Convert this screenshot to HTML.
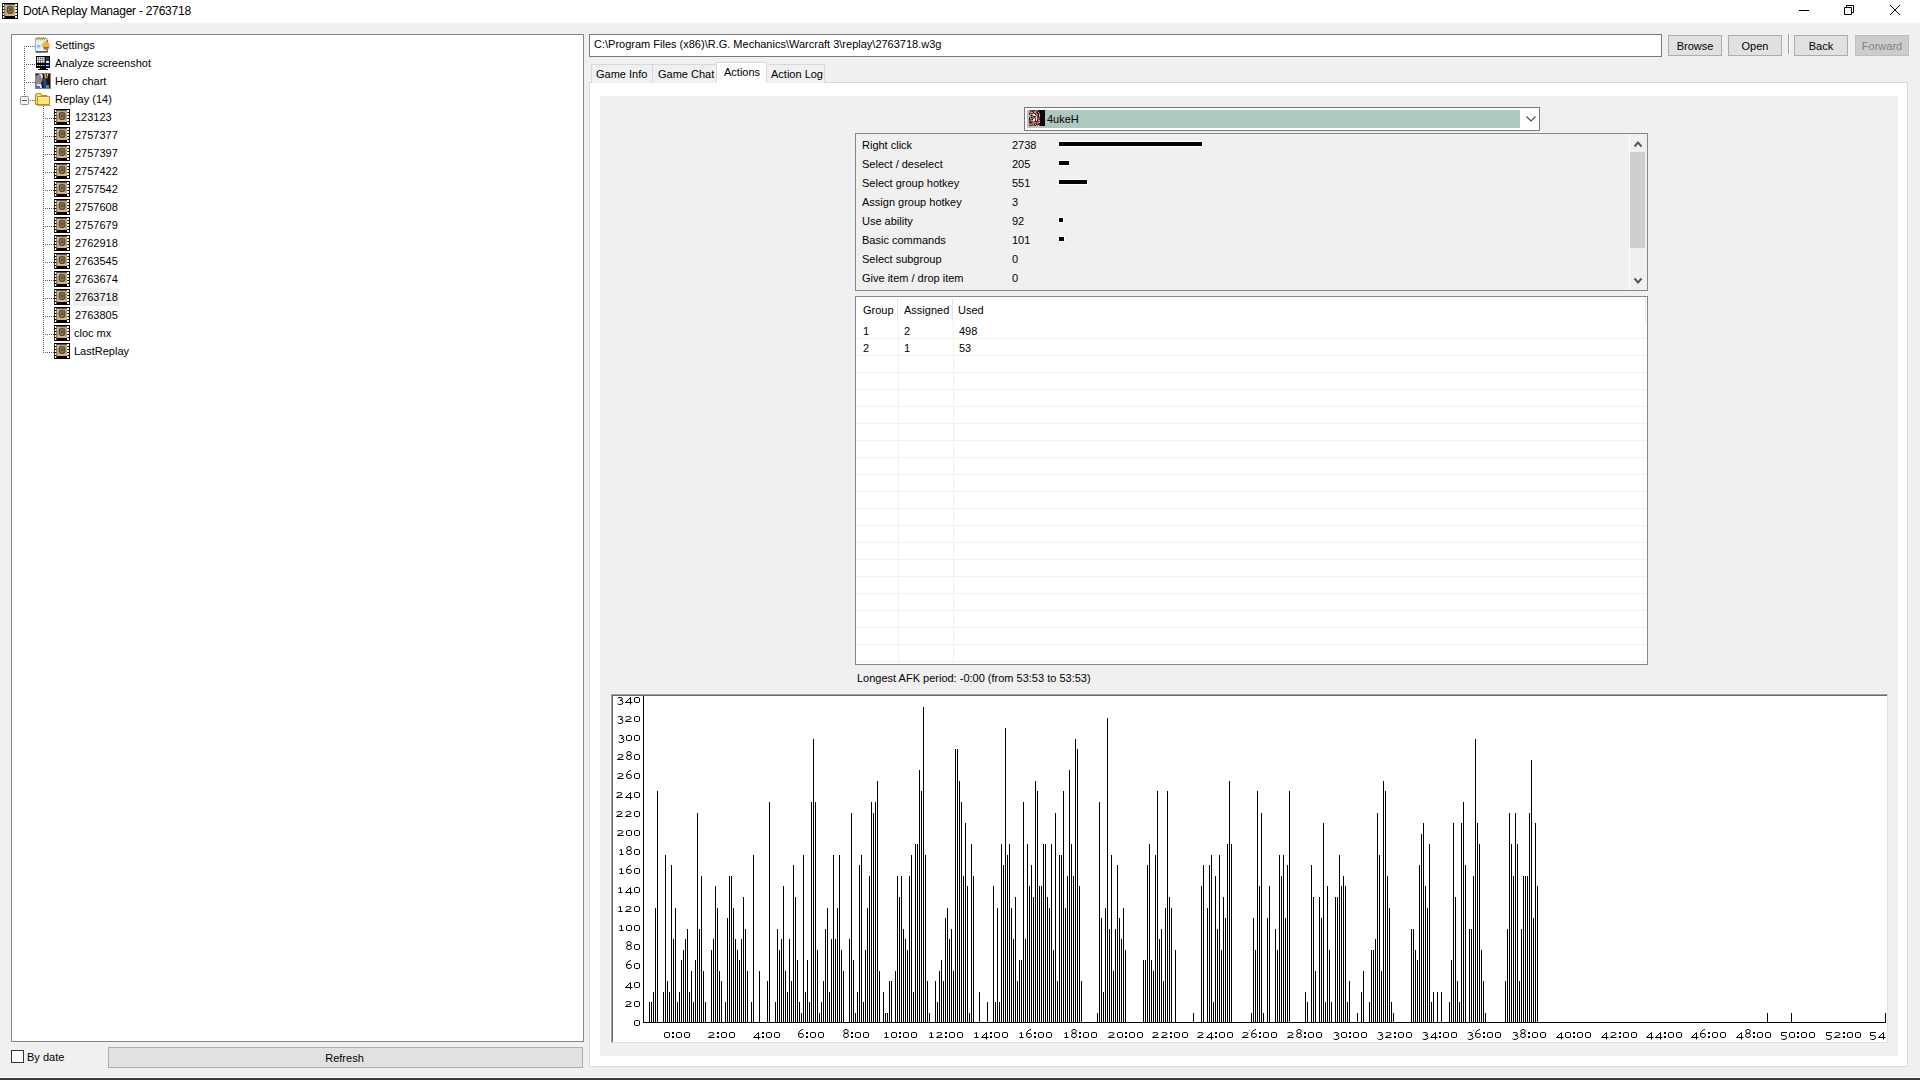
<!DOCTYPE html><html><head><meta charset="utf-8"><style>
*{margin:0;padding:0;box-sizing:border-box}
html,body{width:1920px;height:1080px;overflow:hidden;background:#f0f0f0;font-family:"Liberation Sans",sans-serif;font-size:11px;color:#000}
.a{position:absolute}
.t{position:absolute;white-space:nowrap;line-height:13px;height:13px}
.btn{position:absolute;background:#e1e1e1;border:1px solid #adadad;text-align:center;line-height:19px}
.tab{position:absolute;background:#f0f0f0;border:1px solid #d9d9d9;border-bottom:none;text-align:center}
</style></head><body>
<div class="a" style="left:0px;top:0px;width:1920px;height:23px;background:#fff"></div>
<div class="a" style="left:2px;top:3px"><svg width="16" height="16" viewBox="0 0 16 16"><rect width="16" height="16" fill="#000"/><rect x="2.5" y="1.5" width="11" height="11.5" fill="#b9a27a"/><rect x="3" y="2" width="3" height="3" fill="#cdb88e"/><path d="M5.5 4Q8 2.8 10.5 4.2L11 8Q10 10.8 8 10.8L6.2 10Q4.8 8 5.5 4Z" fill="#8a7654" stroke="#54452c" stroke-width="1.1"/><rect x="7" y="5.5" width="2.5" height="2.5" fill="#5e4e34"/><rect x="4" y="11" width="8.5" height="1.6" fill="#dcb48c"/><rect x="0.8" y="1" width="1.5" height="2" fill="#fff"/><rect x="13" y="1" width="2" height="2" fill="#fff"/><rect x="0.8" y="4" width="1.5" height="2" fill="#fff"/><rect x="13" y="4" width="2" height="2" fill="#fff"/><rect x="0.8" y="7" width="1.5" height="2" fill="#fff"/><rect x="13" y="7" width="2" height="2" fill="#fff"/><rect x="0.8" y="10" width="1.5" height="2" fill="#fff"/><rect x="13" y="10" width="2" height="2" fill="#fff"/><rect x="0.8" y="13" width="1.5" height="2" fill="#fff"/><rect x="13" y="13" width="2" height="2" fill="#fff"/></svg></div>
<div class="t" style="left:23px;top:5px;font-size:12px;color:#000;letter-spacing:-0.24px">DotA Replay Manager - 2763718</div>
<div class="a" style="left:1799px;top:10px;width:10px;height:1px;background:#000"></div>
<svg class="a" style="left:1840px;top:2px" width="20" height="18"><path d="M4.5 5.5h7v7h-7z M6.5 5.5V3.5H13.5V10.5H11.5" fill="none" stroke="#000" stroke-width="1"/></svg>
<svg class="a" style="left:1886px;top:2px" width="20" height="18"><path d="M4 3L14 13M14 3L4 13" fill="none" stroke="#000" stroke-width="1"/></svg>
<div class="a" style="left:11px;top:34px;width:573px;height:1008px;background:#fff;border:1px solid #828790"></div>
<div class="t" style="left:55px;top:39px;font-size:11px;color:#000;">Settings</div>
<div class="a" style="left:35px;top:37px;line-height:0"><svg width="16" height="16" viewBox="0 0 16 16"><rect x="0.5" y="1.5" width="11.5" height="13.5" fill="#e2f4fb" stroke="#aaa8d8" stroke-width="1"/><rect x="1" y="14" width="12" height="1.6" fill="#4c5468"/><rect x="11.5" y="3" width="1.5" height="12" fill="#707888"/><path d="M1.5 2.5L2.5 0.5L3.5 2.5L4.5 0.5L5.5 2.5L6.5 0.5L7.5 2.5L8.5 0.5L9.5 2.5L10.5 0.5" fill="none" stroke="#c0a030" stroke-width="1.2"/><rect x="2" y="8" width="3.5" height="2.5" fill="#90bce8"/><path d="M7.5 5.5h2v-1.5h2v1.5h2.5v2h1v2.5h-1v1.5H8v-1.5h-1v-2.5h0.5z" fill="#f2b634"/><path d="M8.5 10h5.5v1.5H11v1H9z" fill="#a8601a"/></svg></div>
<div class="t" style="left:55px;top:57px;font-size:11px;color:#000;">Analyze screenshot</div>
<div class="a" style="left:35px;top:55px;line-height:0"><svg width="16" height="16" viewBox="0 0 16 16" shape-rendering="crispEdges"><rect x="1" y="1" width="14" height="12" fill="#000"/><rect x="5" y="13" width="6" height="1" fill="#000"/><rect x="3" y="14" width="10" height="1" fill="#000"/><rect x="2" y="2" width="1" height="1" fill="#e8e8e8"/><rect x="3" y="2" width="1" height="1" fill="#9a9a9a"/><rect x="2" y="3" width="1" height="1" fill="#b8b8b8"/><rect x="3" y="3" width="1" height="1" fill="#606060"/><rect x="2" y="4" width="1" height="1" fill="#e8e8e8"/><rect x="3" y="4" width="1" height="1" fill="#9a9a9a"/><rect x="2" y="5" width="1" height="1" fill="#b8b8b8"/><rect x="3" y="5" width="1" height="1" fill="#606060"/><rect x="2" y="6" width="1" height="1" fill="#e8e8e8"/><rect x="3" y="6" width="1" height="1" fill="#9a9a9a"/><rect x="2" y="7" width="1" height="1" fill="#b8b8b8"/><rect x="3" y="7" width="1" height="1" fill="#606060"/><rect x="4" y="2" width="1" height="1" fill="#e8e8e8"/><rect x="5" y="2" width="1" height="1" fill="#9a9a9a"/><rect x="4" y="3" width="1" height="1" fill="#b8b8b8"/><rect x="5" y="3" width="1" height="1" fill="#606060"/><rect x="4" y="4" width="1" height="1" fill="#e8e8e8"/><rect x="5" y="4" width="1" height="1" fill="#9a9a9a"/><rect x="4" y="5" width="1" height="1" fill="#b8b8b8"/><rect x="5" y="5" width="1" height="1" fill="#606060"/><rect x="4" y="6" width="1" height="1" fill="#e8e8e8"/><rect x="5" y="6" width="1" height="1" fill="#9a9a9a"/><rect x="4" y="7" width="1" height="1" fill="#b8b8b8"/><rect x="5" y="7" width="1" height="1" fill="#606060"/><rect x="6" y="2" width="1" height="1" fill="#e8e8e8"/><rect x="7" y="2" width="1" height="1" fill="#9a9a9a"/><rect x="6" y="3" width="1" height="1" fill="#b8b8b8"/><rect x="7" y="3" width="1" height="1" fill="#606060"/><rect x="6" y="4" width="1" height="1" fill="#e8e8e8"/><rect x="7" y="4" width="1" height="1" fill="#9a9a9a"/><rect x="6" y="5" width="1" height="1" fill="#b8b8b8"/><rect x="7" y="5" width="1" height="1" fill="#606060"/><rect x="6" y="6" width="1" height="1" fill="#e8e8e8"/><rect x="7" y="6" width="1" height="1" fill="#9a9a9a"/><rect x="6" y="7" width="1" height="1" fill="#b8b8b8"/><rect x="7" y="7" width="1" height="1" fill="#606060"/><rect x="8" y="2" width="1" height="1" fill="#e8e8e8"/><rect x="9" y="2" width="1" height="1" fill="#9a9a9a"/><rect x="8" y="3" width="1" height="1" fill="#b8b8b8"/><rect x="9" y="3" width="1" height="1" fill="#606060"/><rect x="8" y="4" width="1" height="1" fill="#e8e8e8"/><rect x="9" y="4" width="1" height="1" fill="#9a9a9a"/><rect x="8" y="5" width="1" height="1" fill="#b8b8b8"/><rect x="9" y="5" width="1" height="1" fill="#606060"/><rect x="8" y="6" width="1" height="1" fill="#e8e8e8"/><rect x="9" y="6" width="1" height="1" fill="#9a9a9a"/><rect x="8" y="7" width="1" height="1" fill="#b8b8b8"/><rect x="9" y="7" width="1" height="1" fill="#606060"/><rect x="2" y="10" width="1" height="1" fill="#c8c8c8"/><rect x="3" y="10" width="1" height="1" fill="#505050"/><rect x="4" y="10" width="1" height="1" fill="#c8c8c8"/><rect x="5" y="10" width="1" height="1" fill="#505050"/><rect x="6" y="10" width="1" height="1" fill="#c8c8c8"/><rect x="7" y="10" width="1" height="1" fill="#505050"/><rect x="8" y="10" width="1" height="1" fill="#c8c8c8"/><rect x="9" y="10" width="1" height="1" fill="#505050"/><rect x="11" y="2" width="3" height="4" fill="#0b4a44"/><rect x="11" y="6" width="3" height="2" fill="#e8e8e8"/><rect x="11" y="9" width="3" height="1" fill="#1010ff"/><rect x="11" y="10" width="3" height="1" fill="#c0c0c0"/><rect x="11" y="11" width="3" height="1" fill="#1010ff"/></svg></div>
<div class="t" style="left:55px;top:75px;font-size:11px;color:#000;">Hero chart</div>
<div class="a" style="left:35px;top:73px;line-height:0"><svg width="16" height="16" viewBox="0 0 16 16"><rect x="0" y="0" width="16" height="16" fill="#8a8478"/><rect x="1" y="1" width="14" height="14" fill="#1a1412"/><path d="M1 3L4 1h3l1 5-2 4 1 4H1z" fill="#8c8c8c"/><path d="M5 1h2l1 3-1 1z" fill="#f0f0f0"/><path d="M9 1h2l1 4-2 1z" fill="#d8a020"/><path d="M12 1h1l1 3-1 2z" fill="#f4f4f4"/><path d="M7 6h4l1 4-1 5H9z" fill="#1a4a8a"/><path d="M2 11h4l1 4H2z" fill="#e8e8e8"/><rect x="1" y="13" width="4" height="2" fill="#2a78c8"/><rect x="11" y="12" width="3" height="3" fill="#3a8ad0"/><rect x="13" y="2" width="2" height="8" fill="#3a0808"/></svg></div>
<div class="t" style="left:55px;top:93px;font-size:11px;color:#000;">Replay (14)</div>
<div class="a" style="left:35px;top:92px;line-height:0"><svg width="16" height="14" viewBox="0 0 16 14"><path d="M0.5 12.5V2.5h1v-1h4v1h1v1h5.5v1.5h1.5V12.5z" fill="#f8e070" stroke="#c88a10" stroke-width="1"/><path d="M2.5 12.5V4.5h12v8z" fill="#fce878" stroke="#c88a10" stroke-width="1"/><rect x="3" y="5" width="11" height="1" fill="#fffde8"/><rect x="2" y="13" width="14" height="1" fill="#606878" opacity="0.6"/></svg></div>
<svg class="a" style="left:0;top:0" width="600" height="400" shape-rendering="crispEdges"><path d="M24 46h1v1h-1zM24 48h1v1h-1zM24 50h1v1h-1zM24 52h1v1h-1zM24 54h1v1h-1zM24 56h1v1h-1zM24 58h1v1h-1zM24 60h1v1h-1zM24 62h1v1h-1zM24 64h1v1h-1zM24 66h1v1h-1zM24 68h1v1h-1zM24 70h1v1h-1zM24 72h1v1h-1zM24 74h1v1h-1zM24 76h1v1h-1zM24 78h1v1h-1zM24 80h1v1h-1zM24 82h1v1h-1zM24 84h1v1h-1zM24 86h1v1h-1zM24 88h1v1h-1zM24 90h1v1h-1zM24 92h1v1h-1zM24 94h1v1h-1zM26 46h1v1h-1zM28 46h1v1h-1zM30 46h1v1h-1zM32 46h1v1h-1zM34 46h1v1h-1zM26 64h1v1h-1zM28 64h1v1h-1zM30 64h1v1h-1zM32 64h1v1h-1zM34 64h1v1h-1zM26 82h1v1h-1zM28 82h1v1h-1zM30 82h1v1h-1zM32 82h1v1h-1zM34 82h1v1h-1zM30 100h1v1h-1zM32 100h1v1h-1zM34 100h1v1h-1zM43 106h1v1h-1zM43 108h1v1h-1zM43 110h1v1h-1zM43 112h1v1h-1zM43 114h1v1h-1zM43 116h1v1h-1zM43 118h1v1h-1zM43 120h1v1h-1zM43 122h1v1h-1zM43 124h1v1h-1zM43 126h1v1h-1zM43 128h1v1h-1zM43 130h1v1h-1zM43 132h1v1h-1zM43 134h1v1h-1zM43 136h1v1h-1zM43 138h1v1h-1zM43 140h1v1h-1zM43 142h1v1h-1zM43 144h1v1h-1zM43 146h1v1h-1zM43 148h1v1h-1zM43 150h1v1h-1zM43 152h1v1h-1zM43 154h1v1h-1zM43 156h1v1h-1zM43 158h1v1h-1zM43 160h1v1h-1zM43 162h1v1h-1zM43 164h1v1h-1zM43 166h1v1h-1zM43 168h1v1h-1zM43 170h1v1h-1zM43 172h1v1h-1zM43 174h1v1h-1zM43 176h1v1h-1zM43 178h1v1h-1zM43 180h1v1h-1zM43 182h1v1h-1zM43 184h1v1h-1zM43 186h1v1h-1zM43 188h1v1h-1zM43 190h1v1h-1zM43 192h1v1h-1zM43 194h1v1h-1zM43 196h1v1h-1zM43 198h1v1h-1zM43 200h1v1h-1zM43 202h1v1h-1zM43 204h1v1h-1zM43 206h1v1h-1zM43 208h1v1h-1zM43 210h1v1h-1zM43 212h1v1h-1zM43 214h1v1h-1zM43 216h1v1h-1zM43 218h1v1h-1zM43 220h1v1h-1zM43 222h1v1h-1zM43 224h1v1h-1zM43 226h1v1h-1zM43 228h1v1h-1zM43 230h1v1h-1zM43 232h1v1h-1zM43 234h1v1h-1zM43 236h1v1h-1zM43 238h1v1h-1zM43 240h1v1h-1zM43 242h1v1h-1zM43 244h1v1h-1zM43 246h1v1h-1zM43 248h1v1h-1zM43 250h1v1h-1zM43 252h1v1h-1zM43 254h1v1h-1zM43 256h1v1h-1zM43 258h1v1h-1zM43 260h1v1h-1zM43 262h1v1h-1zM43 264h1v1h-1zM43 266h1v1h-1zM43 268h1v1h-1zM43 270h1v1h-1zM43 272h1v1h-1zM43 274h1v1h-1zM43 276h1v1h-1zM43 278h1v1h-1zM43 280h1v1h-1zM43 282h1v1h-1zM43 284h1v1h-1zM43 286h1v1h-1zM43 288h1v1h-1zM43 290h1v1h-1zM43 292h1v1h-1zM43 294h1v1h-1zM43 296h1v1h-1zM43 298h1v1h-1zM43 300h1v1h-1zM43 302h1v1h-1zM43 304h1v1h-1zM43 306h1v1h-1zM43 308h1v1h-1zM43 310h1v1h-1zM43 312h1v1h-1zM43 314h1v1h-1zM43 316h1v1h-1zM43 318h1v1h-1zM43 320h1v1h-1zM43 322h1v1h-1zM43 324h1v1h-1zM43 326h1v1h-1zM43 328h1v1h-1zM43 330h1v1h-1zM43 332h1v1h-1zM43 334h1v1h-1zM43 336h1v1h-1zM43 338h1v1h-1zM43 340h1v1h-1zM43 342h1v1h-1zM43 344h1v1h-1zM43 346h1v1h-1zM43 348h1v1h-1zM43 350h1v1h-1zM43 352h1v1h-1zM45 118h1v1h-1zM47 118h1v1h-1zM49 118h1v1h-1zM51 118h1v1h-1zM53 118h1v1h-1zM45 136h1v1h-1zM47 136h1v1h-1zM49 136h1v1h-1zM51 136h1v1h-1zM53 136h1v1h-1zM45 154h1v1h-1zM47 154h1v1h-1zM49 154h1v1h-1zM51 154h1v1h-1zM53 154h1v1h-1zM45 172h1v1h-1zM47 172h1v1h-1zM49 172h1v1h-1zM51 172h1v1h-1zM53 172h1v1h-1zM45 190h1v1h-1zM47 190h1v1h-1zM49 190h1v1h-1zM51 190h1v1h-1zM53 190h1v1h-1zM45 208h1v1h-1zM47 208h1v1h-1zM49 208h1v1h-1zM51 208h1v1h-1zM53 208h1v1h-1zM45 226h1v1h-1zM47 226h1v1h-1zM49 226h1v1h-1zM51 226h1v1h-1zM53 226h1v1h-1zM45 244h1v1h-1zM47 244h1v1h-1zM49 244h1v1h-1zM51 244h1v1h-1zM53 244h1v1h-1zM45 262h1v1h-1zM47 262h1v1h-1zM49 262h1v1h-1zM51 262h1v1h-1zM53 262h1v1h-1zM45 280h1v1h-1zM47 280h1v1h-1zM49 280h1v1h-1zM51 280h1v1h-1zM53 280h1v1h-1zM45 298h1v1h-1zM47 298h1v1h-1zM49 298h1v1h-1zM51 298h1v1h-1zM53 298h1v1h-1zM45 316h1v1h-1zM47 316h1v1h-1zM49 316h1v1h-1zM51 316h1v1h-1zM53 316h1v1h-1zM45 334h1v1h-1zM47 334h1v1h-1zM49 334h1v1h-1zM51 334h1v1h-1zM53 334h1v1h-1zM45 352h1v1h-1zM47 352h1v1h-1zM49 352h1v1h-1zM51 352h1v1h-1zM53 352h1v1h-1z" fill="#606060"/></svg>
<div class="a" style="left:20px;top:96px;line-height:0"><svg width="9" height="9" viewBox="0 0 9 9"><rect x="0.5" y="0.5" width="8" height="8" rx="1" fill="#f4f4f4" stroke="#8c8c8c" stroke-width="1"/><rect x="2" y="4" width="5" height="1" fill="#3c50a0"/></svg></div>
<div class="t" style="left:75px;top:111px;font-size:11px;color:#000;">123123</div>
<div class="a" style="left:54px;top:109px;line-height:0"><svg width="16" height="16" viewBox="0 0 16 16"><rect width="16" height="16" fill="#000"/><rect x="2.5" y="1.5" width="11" height="11.5" fill="#b9a27a"/><rect x="3" y="2" width="3" height="3" fill="#cdb88e"/><path d="M5.5 4Q8 2.8 10.5 4.2L11 8Q10 10.8 8 10.8L6.2 10Q4.8 8 5.5 4Z" fill="#8a7654" stroke="#54452c" stroke-width="1.1"/><rect x="7" y="5.5" width="2.5" height="2.5" fill="#5e4e34"/><rect x="4" y="11" width="8.5" height="1.6" fill="#dcb48c"/><rect x="0.8" y="1" width="1.5" height="2" fill="#fff"/><rect x="13" y="1" width="2" height="2" fill="#fff"/><rect x="0.8" y="4" width="1.5" height="2" fill="#fff"/><rect x="13" y="4" width="2" height="2" fill="#fff"/><rect x="0.8" y="7" width="1.5" height="2" fill="#fff"/><rect x="13" y="7" width="2" height="2" fill="#fff"/><rect x="0.8" y="10" width="1.5" height="2" fill="#fff"/><rect x="13" y="10" width="2" height="2" fill="#fff"/><rect x="0.8" y="13" width="1.5" height="2" fill="#fff"/><rect x="13" y="13" width="2" height="2" fill="#fff"/></svg></div>
<div class="t" style="left:75px;top:129px;font-size:11px;color:#000;">2757377</div>
<div class="a" style="left:54px;top:127px;line-height:0"><svg width="16" height="16" viewBox="0 0 16 16"><rect width="16" height="16" fill="#000"/><rect x="2.5" y="1.5" width="11" height="11.5" fill="#b9a27a"/><rect x="3" y="2" width="3" height="3" fill="#cdb88e"/><path d="M5.5 4Q8 2.8 10.5 4.2L11 8Q10 10.8 8 10.8L6.2 10Q4.8 8 5.5 4Z" fill="#8a7654" stroke="#54452c" stroke-width="1.1"/><rect x="7" y="5.5" width="2.5" height="2.5" fill="#5e4e34"/><rect x="4" y="11" width="8.5" height="1.6" fill="#dcb48c"/><rect x="0.8" y="1" width="1.5" height="2" fill="#fff"/><rect x="13" y="1" width="2" height="2" fill="#fff"/><rect x="0.8" y="4" width="1.5" height="2" fill="#fff"/><rect x="13" y="4" width="2" height="2" fill="#fff"/><rect x="0.8" y="7" width="1.5" height="2" fill="#fff"/><rect x="13" y="7" width="2" height="2" fill="#fff"/><rect x="0.8" y="10" width="1.5" height="2" fill="#fff"/><rect x="13" y="10" width="2" height="2" fill="#fff"/><rect x="0.8" y="13" width="1.5" height="2" fill="#fff"/><rect x="13" y="13" width="2" height="2" fill="#fff"/></svg></div>
<div class="t" style="left:75px;top:147px;font-size:11px;color:#000;">2757397</div>
<div class="a" style="left:54px;top:145px;line-height:0"><svg width="16" height="16" viewBox="0 0 16 16"><rect width="16" height="16" fill="#000"/><rect x="2.5" y="1.5" width="11" height="11.5" fill="#b9a27a"/><rect x="3" y="2" width="3" height="3" fill="#cdb88e"/><path d="M5.5 4Q8 2.8 10.5 4.2L11 8Q10 10.8 8 10.8L6.2 10Q4.8 8 5.5 4Z" fill="#8a7654" stroke="#54452c" stroke-width="1.1"/><rect x="7" y="5.5" width="2.5" height="2.5" fill="#5e4e34"/><rect x="4" y="11" width="8.5" height="1.6" fill="#dcb48c"/><rect x="0.8" y="1" width="1.5" height="2" fill="#fff"/><rect x="13" y="1" width="2" height="2" fill="#fff"/><rect x="0.8" y="4" width="1.5" height="2" fill="#fff"/><rect x="13" y="4" width="2" height="2" fill="#fff"/><rect x="0.8" y="7" width="1.5" height="2" fill="#fff"/><rect x="13" y="7" width="2" height="2" fill="#fff"/><rect x="0.8" y="10" width="1.5" height="2" fill="#fff"/><rect x="13" y="10" width="2" height="2" fill="#fff"/><rect x="0.8" y="13" width="1.5" height="2" fill="#fff"/><rect x="13" y="13" width="2" height="2" fill="#fff"/></svg></div>
<div class="t" style="left:75px;top:165px;font-size:11px;color:#000;">2757422</div>
<div class="a" style="left:54px;top:163px;line-height:0"><svg width="16" height="16" viewBox="0 0 16 16"><rect width="16" height="16" fill="#000"/><rect x="2.5" y="1.5" width="11" height="11.5" fill="#b9a27a"/><rect x="3" y="2" width="3" height="3" fill="#cdb88e"/><path d="M5.5 4Q8 2.8 10.5 4.2L11 8Q10 10.8 8 10.8L6.2 10Q4.8 8 5.5 4Z" fill="#8a7654" stroke="#54452c" stroke-width="1.1"/><rect x="7" y="5.5" width="2.5" height="2.5" fill="#5e4e34"/><rect x="4" y="11" width="8.5" height="1.6" fill="#dcb48c"/><rect x="0.8" y="1" width="1.5" height="2" fill="#fff"/><rect x="13" y="1" width="2" height="2" fill="#fff"/><rect x="0.8" y="4" width="1.5" height="2" fill="#fff"/><rect x="13" y="4" width="2" height="2" fill="#fff"/><rect x="0.8" y="7" width="1.5" height="2" fill="#fff"/><rect x="13" y="7" width="2" height="2" fill="#fff"/><rect x="0.8" y="10" width="1.5" height="2" fill="#fff"/><rect x="13" y="10" width="2" height="2" fill="#fff"/><rect x="0.8" y="13" width="1.5" height="2" fill="#fff"/><rect x="13" y="13" width="2" height="2" fill="#fff"/></svg></div>
<div class="t" style="left:75px;top:183px;font-size:11px;color:#000;">2757542</div>
<div class="a" style="left:54px;top:181px;line-height:0"><svg width="16" height="16" viewBox="0 0 16 16"><rect width="16" height="16" fill="#000"/><rect x="2.5" y="1.5" width="11" height="11.5" fill="#b9a27a"/><rect x="3" y="2" width="3" height="3" fill="#cdb88e"/><path d="M5.5 4Q8 2.8 10.5 4.2L11 8Q10 10.8 8 10.8L6.2 10Q4.8 8 5.5 4Z" fill="#8a7654" stroke="#54452c" stroke-width="1.1"/><rect x="7" y="5.5" width="2.5" height="2.5" fill="#5e4e34"/><rect x="4" y="11" width="8.5" height="1.6" fill="#dcb48c"/><rect x="0.8" y="1" width="1.5" height="2" fill="#fff"/><rect x="13" y="1" width="2" height="2" fill="#fff"/><rect x="0.8" y="4" width="1.5" height="2" fill="#fff"/><rect x="13" y="4" width="2" height="2" fill="#fff"/><rect x="0.8" y="7" width="1.5" height="2" fill="#fff"/><rect x="13" y="7" width="2" height="2" fill="#fff"/><rect x="0.8" y="10" width="1.5" height="2" fill="#fff"/><rect x="13" y="10" width="2" height="2" fill="#fff"/><rect x="0.8" y="13" width="1.5" height="2" fill="#fff"/><rect x="13" y="13" width="2" height="2" fill="#fff"/></svg></div>
<div class="t" style="left:75px;top:201px;font-size:11px;color:#000;">2757608</div>
<div class="a" style="left:54px;top:199px;line-height:0"><svg width="16" height="16" viewBox="0 0 16 16"><rect width="16" height="16" fill="#000"/><rect x="2.5" y="1.5" width="11" height="11.5" fill="#b9a27a"/><rect x="3" y="2" width="3" height="3" fill="#cdb88e"/><path d="M5.5 4Q8 2.8 10.5 4.2L11 8Q10 10.8 8 10.8L6.2 10Q4.8 8 5.5 4Z" fill="#8a7654" stroke="#54452c" stroke-width="1.1"/><rect x="7" y="5.5" width="2.5" height="2.5" fill="#5e4e34"/><rect x="4" y="11" width="8.5" height="1.6" fill="#dcb48c"/><rect x="0.8" y="1" width="1.5" height="2" fill="#fff"/><rect x="13" y="1" width="2" height="2" fill="#fff"/><rect x="0.8" y="4" width="1.5" height="2" fill="#fff"/><rect x="13" y="4" width="2" height="2" fill="#fff"/><rect x="0.8" y="7" width="1.5" height="2" fill="#fff"/><rect x="13" y="7" width="2" height="2" fill="#fff"/><rect x="0.8" y="10" width="1.5" height="2" fill="#fff"/><rect x="13" y="10" width="2" height="2" fill="#fff"/><rect x="0.8" y="13" width="1.5" height="2" fill="#fff"/><rect x="13" y="13" width="2" height="2" fill="#fff"/></svg></div>
<div class="t" style="left:75px;top:219px;font-size:11px;color:#000;">2757679</div>
<div class="a" style="left:54px;top:217px;line-height:0"><svg width="16" height="16" viewBox="0 0 16 16"><rect width="16" height="16" fill="#000"/><rect x="2.5" y="1.5" width="11" height="11.5" fill="#b9a27a"/><rect x="3" y="2" width="3" height="3" fill="#cdb88e"/><path d="M5.5 4Q8 2.8 10.5 4.2L11 8Q10 10.8 8 10.8L6.2 10Q4.8 8 5.5 4Z" fill="#8a7654" stroke="#54452c" stroke-width="1.1"/><rect x="7" y="5.5" width="2.5" height="2.5" fill="#5e4e34"/><rect x="4" y="11" width="8.5" height="1.6" fill="#dcb48c"/><rect x="0.8" y="1" width="1.5" height="2" fill="#fff"/><rect x="13" y="1" width="2" height="2" fill="#fff"/><rect x="0.8" y="4" width="1.5" height="2" fill="#fff"/><rect x="13" y="4" width="2" height="2" fill="#fff"/><rect x="0.8" y="7" width="1.5" height="2" fill="#fff"/><rect x="13" y="7" width="2" height="2" fill="#fff"/><rect x="0.8" y="10" width="1.5" height="2" fill="#fff"/><rect x="13" y="10" width="2" height="2" fill="#fff"/><rect x="0.8" y="13" width="1.5" height="2" fill="#fff"/><rect x="13" y="13" width="2" height="2" fill="#fff"/></svg></div>
<div class="t" style="left:75px;top:237px;font-size:11px;color:#000;">2762918</div>
<div class="a" style="left:54px;top:235px;line-height:0"><svg width="16" height="16" viewBox="0 0 16 16"><rect width="16" height="16" fill="#000"/><rect x="2.5" y="1.5" width="11" height="11.5" fill="#b9a27a"/><rect x="3" y="2" width="3" height="3" fill="#cdb88e"/><path d="M5.5 4Q8 2.8 10.5 4.2L11 8Q10 10.8 8 10.8L6.2 10Q4.8 8 5.5 4Z" fill="#8a7654" stroke="#54452c" stroke-width="1.1"/><rect x="7" y="5.5" width="2.5" height="2.5" fill="#5e4e34"/><rect x="4" y="11" width="8.5" height="1.6" fill="#dcb48c"/><rect x="0.8" y="1" width="1.5" height="2" fill="#fff"/><rect x="13" y="1" width="2" height="2" fill="#fff"/><rect x="0.8" y="4" width="1.5" height="2" fill="#fff"/><rect x="13" y="4" width="2" height="2" fill="#fff"/><rect x="0.8" y="7" width="1.5" height="2" fill="#fff"/><rect x="13" y="7" width="2" height="2" fill="#fff"/><rect x="0.8" y="10" width="1.5" height="2" fill="#fff"/><rect x="13" y="10" width="2" height="2" fill="#fff"/><rect x="0.8" y="13" width="1.5" height="2" fill="#fff"/><rect x="13" y="13" width="2" height="2" fill="#fff"/></svg></div>
<div class="t" style="left:75px;top:255px;font-size:11px;color:#000;">2763545</div>
<div class="a" style="left:54px;top:253px;line-height:0"><svg width="16" height="16" viewBox="0 0 16 16"><rect width="16" height="16" fill="#000"/><rect x="2.5" y="1.5" width="11" height="11.5" fill="#b9a27a"/><rect x="3" y="2" width="3" height="3" fill="#cdb88e"/><path d="M5.5 4Q8 2.8 10.5 4.2L11 8Q10 10.8 8 10.8L6.2 10Q4.8 8 5.5 4Z" fill="#8a7654" stroke="#54452c" stroke-width="1.1"/><rect x="7" y="5.5" width="2.5" height="2.5" fill="#5e4e34"/><rect x="4" y="11" width="8.5" height="1.6" fill="#dcb48c"/><rect x="0.8" y="1" width="1.5" height="2" fill="#fff"/><rect x="13" y="1" width="2" height="2" fill="#fff"/><rect x="0.8" y="4" width="1.5" height="2" fill="#fff"/><rect x="13" y="4" width="2" height="2" fill="#fff"/><rect x="0.8" y="7" width="1.5" height="2" fill="#fff"/><rect x="13" y="7" width="2" height="2" fill="#fff"/><rect x="0.8" y="10" width="1.5" height="2" fill="#fff"/><rect x="13" y="10" width="2" height="2" fill="#fff"/><rect x="0.8" y="13" width="1.5" height="2" fill="#fff"/><rect x="13" y="13" width="2" height="2" fill="#fff"/></svg></div>
<div class="t" style="left:75px;top:273px;font-size:11px;color:#000;">2763674</div>
<div class="a" style="left:54px;top:271px;line-height:0"><svg width="16" height="16" viewBox="0 0 16 16"><rect width="16" height="16" fill="#000"/><rect x="2.5" y="1.5" width="11" height="11.5" fill="#b9a27a"/><rect x="3" y="2" width="3" height="3" fill="#cdb88e"/><path d="M5.5 4Q8 2.8 10.5 4.2L11 8Q10 10.8 8 10.8L6.2 10Q4.8 8 5.5 4Z" fill="#8a7654" stroke="#54452c" stroke-width="1.1"/><rect x="7" y="5.5" width="2.5" height="2.5" fill="#5e4e34"/><rect x="4" y="11" width="8.5" height="1.6" fill="#dcb48c"/><rect x="0.8" y="1" width="1.5" height="2" fill="#fff"/><rect x="13" y="1" width="2" height="2" fill="#fff"/><rect x="0.8" y="4" width="1.5" height="2" fill="#fff"/><rect x="13" y="4" width="2" height="2" fill="#fff"/><rect x="0.8" y="7" width="1.5" height="2" fill="#fff"/><rect x="13" y="7" width="2" height="2" fill="#fff"/><rect x="0.8" y="10" width="1.5" height="2" fill="#fff"/><rect x="13" y="10" width="2" height="2" fill="#fff"/><rect x="0.8" y="13" width="1.5" height="2" fill="#fff"/><rect x="13" y="13" width="2" height="2" fill="#fff"/></svg></div>
<div class="a" style="left:73px;top:288px;width:46px;height:18px;background:#f0f0f0"></div>
<div class="t" style="left:75px;top:291px;font-size:11px;color:#000;">2763718</div>
<div class="a" style="left:54px;top:289px;line-height:0"><svg width="16" height="16" viewBox="0 0 16 16"><rect width="16" height="16" fill="#000"/><rect x="2.5" y="1.5" width="11" height="11.5" fill="#b9a27a"/><rect x="3" y="2" width="3" height="3" fill="#cdb88e"/><path d="M5.5 4Q8 2.8 10.5 4.2L11 8Q10 10.8 8 10.8L6.2 10Q4.8 8 5.5 4Z" fill="#8a7654" stroke="#54452c" stroke-width="1.1"/><rect x="7" y="5.5" width="2.5" height="2.5" fill="#5e4e34"/><rect x="4" y="11" width="8.5" height="1.6" fill="#dcb48c"/><rect x="0.8" y="1" width="1.5" height="2" fill="#fff"/><rect x="13" y="1" width="2" height="2" fill="#fff"/><rect x="0.8" y="4" width="1.5" height="2" fill="#fff"/><rect x="13" y="4" width="2" height="2" fill="#fff"/><rect x="0.8" y="7" width="1.5" height="2" fill="#fff"/><rect x="13" y="7" width="2" height="2" fill="#fff"/><rect x="0.8" y="10" width="1.5" height="2" fill="#fff"/><rect x="13" y="10" width="2" height="2" fill="#fff"/><rect x="0.8" y="13" width="1.5" height="2" fill="#fff"/><rect x="13" y="13" width="2" height="2" fill="#fff"/></svg></div>
<div class="t" style="left:75px;top:309px;font-size:11px;color:#000;">2763805</div>
<div class="a" style="left:54px;top:307px;line-height:0"><svg width="16" height="16" viewBox="0 0 16 16"><rect width="16" height="16" fill="#000"/><rect x="2.5" y="1.5" width="11" height="11.5" fill="#b9a27a"/><rect x="3" y="2" width="3" height="3" fill="#cdb88e"/><path d="M5.5 4Q8 2.8 10.5 4.2L11 8Q10 10.8 8 10.8L6.2 10Q4.8 8 5.5 4Z" fill="#8a7654" stroke="#54452c" stroke-width="1.1"/><rect x="7" y="5.5" width="2.5" height="2.5" fill="#5e4e34"/><rect x="4" y="11" width="8.5" height="1.6" fill="#dcb48c"/><rect x="0.8" y="1" width="1.5" height="2" fill="#fff"/><rect x="13" y="1" width="2" height="2" fill="#fff"/><rect x="0.8" y="4" width="1.5" height="2" fill="#fff"/><rect x="13" y="4" width="2" height="2" fill="#fff"/><rect x="0.8" y="7" width="1.5" height="2" fill="#fff"/><rect x="13" y="7" width="2" height="2" fill="#fff"/><rect x="0.8" y="10" width="1.5" height="2" fill="#fff"/><rect x="13" y="10" width="2" height="2" fill="#fff"/><rect x="0.8" y="13" width="1.5" height="2" fill="#fff"/><rect x="13" y="13" width="2" height="2" fill="#fff"/></svg></div>
<div class="t" style="left:74px;top:327px;font-size:11px;color:#000;">cloc mx</div>
<div class="a" style="left:54px;top:325px;line-height:0"><svg width="16" height="16" viewBox="0 0 16 16"><rect width="16" height="16" fill="#000"/><rect x="2.5" y="1.5" width="11" height="11.5" fill="#b9a27a"/><rect x="3" y="2" width="3" height="3" fill="#cdb88e"/><path d="M5.5 4Q8 2.8 10.5 4.2L11 8Q10 10.8 8 10.8L6.2 10Q4.8 8 5.5 4Z" fill="#8a7654" stroke="#54452c" stroke-width="1.1"/><rect x="7" y="5.5" width="2.5" height="2.5" fill="#5e4e34"/><rect x="4" y="11" width="8.5" height="1.6" fill="#dcb48c"/><rect x="0.8" y="1" width="1.5" height="2" fill="#fff"/><rect x="13" y="1" width="2" height="2" fill="#fff"/><rect x="0.8" y="4" width="1.5" height="2" fill="#fff"/><rect x="13" y="4" width="2" height="2" fill="#fff"/><rect x="0.8" y="7" width="1.5" height="2" fill="#fff"/><rect x="13" y="7" width="2" height="2" fill="#fff"/><rect x="0.8" y="10" width="1.5" height="2" fill="#fff"/><rect x="13" y="10" width="2" height="2" fill="#fff"/><rect x="0.8" y="13" width="1.5" height="2" fill="#fff"/><rect x="13" y="13" width="2" height="2" fill="#fff"/></svg></div>
<div class="t" style="left:74px;top:345px;font-size:11px;color:#000;">LastReplay</div>
<div class="a" style="left:54px;top:343px;line-height:0"><svg width="16" height="16" viewBox="0 0 16 16"><rect width="16" height="16" fill="#000"/><rect x="2.5" y="1.5" width="11" height="11.5" fill="#b9a27a"/><rect x="3" y="2" width="3" height="3" fill="#cdb88e"/><path d="M5.5 4Q8 2.8 10.5 4.2L11 8Q10 10.8 8 10.8L6.2 10Q4.8 8 5.5 4Z" fill="#8a7654" stroke="#54452c" stroke-width="1.1"/><rect x="7" y="5.5" width="2.5" height="2.5" fill="#5e4e34"/><rect x="4" y="11" width="8.5" height="1.6" fill="#dcb48c"/><rect x="0.8" y="1" width="1.5" height="2" fill="#fff"/><rect x="13" y="1" width="2" height="2" fill="#fff"/><rect x="0.8" y="4" width="1.5" height="2" fill="#fff"/><rect x="13" y="4" width="2" height="2" fill="#fff"/><rect x="0.8" y="7" width="1.5" height="2" fill="#fff"/><rect x="13" y="7" width="2" height="2" fill="#fff"/><rect x="0.8" y="10" width="1.5" height="2" fill="#fff"/><rect x="13" y="10" width="2" height="2" fill="#fff"/><rect x="0.8" y="13" width="1.5" height="2" fill="#fff"/><rect x="13" y="13" width="2" height="2" fill="#fff"/></svg></div>
<div class="a" style="left:11px;top:1050px;width:13px;height:13px;background:#fff;border:1px solid #333"></div>
<div class="t" style="left:27px;top:1051px;font-size:11px;color:#000;">By date</div>
<div class="btn" style="left:108px;top:1047px;width:475px;height:21px;line-height:20px;padding-right:2px">Refresh</div>
<div class="a" style="left:589px;top:34px;width:1073px;height:23px;background:#fff;border:1px solid #7a7a7a"></div>
<div class="t" style="left:594px;top:38px;font-size:11px;color:#000;">C:\Program Files (x86)\R.G. Mechanics\Warcraft 3\replay\2763718.w3g</div>
<div class="btn" style="left:1668px;top:35px;width:54px;height:21px;line-height:20px">Browse</div>
<div class="btn" style="left:1728px;top:35px;width:54px;height:21px;line-height:20px">Open</div>
<div class="btn" style="left:1794px;top:35px;width:54px;height:21px;line-height:20px">Back</div>
<div class="btn" style="left:1855px;top:35px;width:54px;height:21px;line-height:20px;background:#cccccc;border-color:#bfbfbf;color:#838383">Forward</div>
<div class="a" style="left:1788px;top:34px;width:1px;height:20px;background:#a0a0a0"></div>
<div class="a" style="left:1789px;top:34px;width:1px;height:21px;background:#fff"></div>
<div class="a" style="left:589px;top:82px;width:1319px;height:985px;background:#fff;border:1px solid #d9d9d9"></div>
<div class="tab" style="left:591px;top:64px;width:62px;height:19px"></div>
<div class="t" style="left:596px;top:68px;font-size:11px;color:#000;">Game Info</div>
<div class="tab" style="left:652px;top:64px;width:65px;height:19px"></div>
<div class="t" style="left:658px;top:68px;font-size:11px;color:#000;">Game Chat</div>
<div class="tab" style="left:766px;top:64px;width:59px;height:19px"></div>
<div class="t" style="left:771px;top:68px;font-size:11px;color:#000;">Action Log</div>
<div class="a" style="left:716px;top:62px;width:51px;height:21px;background:#fff;border:1px solid #d9d9d9;border-bottom:none"></div>
<div class="t" style="left:724px;top:66px;font-size:11px;color:#000;">Actions</div>
<div class="a" style="left:600px;top:96px;width:1298px;height:960px;background:#f0f0f0"></div>
<div class="a" style="left:1024px;top:107px;width:516px;height:24px;background:#fff;border:1px solid #7a7a7a"></div>
<div class="a" style="left:1027px;top:110px;width:493px;height:18px;background:#aec8bf"></div>
<div class="a" style="left:1029px;top:110px;line-height:0"><svg width="16" height="16" viewBox="0 0 16 16" shape-rendering="crispEdges"><rect width="16" height="16" fill="#100808"/><rect x="0" y="0" width="1" height="1" fill="#a05858"/><rect x="1" y="0" width="1" height="1" fill="#b08078"/><rect x="2" y="0" width="1" height="1" fill="#5a3830"/><rect x="3" y="0" width="1" height="1" fill="#2a1414"/><rect x="4" y="0" width="1" height="1" fill="#8a5a50"/><rect x="5" y="0" width="1" height="1" fill="#1a0a0a"/><rect x="6" y="0" width="1" height="1" fill="#8a5a50"/><rect x="7" y="0" width="1" height="1" fill="#a05858"/><rect x="8" y="0" width="1" height="1" fill="#c09088"/><rect x="9" y="0" width="1" height="1" fill="#2a1414"/><rect x="10" y="0" width="1" height="1" fill="#1a0a0a"/><rect x="0" y="1" width="1" height="1" fill="#d8b8b0"/><rect x="1" y="1" width="1" height="1" fill="#2a1414"/><rect x="2" y="1" width="1" height="1" fill="#8a5a50"/><rect x="3" y="1" width="1" height="1" fill="#5a3830"/><rect x="4" y="1" width="1" height="1" fill="#5a3830"/><rect x="5" y="1" width="1" height="1" fill="#8a5a50"/><rect x="6" y="1" width="1" height="1" fill="#d8b8b0"/><rect x="7" y="1" width="1" height="1" fill="#8a5a50"/><rect x="8" y="1" width="1" height="1" fill="#1a0a0a"/><rect x="9" y="1" width="1" height="1" fill="#5a3830"/><rect x="10" y="1" width="1" height="1" fill="#2a1414"/><rect x="0" y="2" width="1" height="1" fill="#c09088"/><rect x="1" y="2" width="1" height="1" fill="#8a5a50"/><rect x="2" y="2" width="1" height="1" fill="#d8b8b0"/><rect x="3" y="2" width="1" height="1" fill="#c09088"/><rect x="4" y="2" width="1" height="1" fill="#2a1414"/><rect x="5" y="2" width="1" height="1" fill="#c09088"/><rect x="6" y="2" width="1" height="1" fill="#c09088"/><rect x="7" y="2" width="1" height="1" fill="#5a3830"/><rect x="8" y="2" width="1" height="1" fill="#2a1414"/><rect x="9" y="2" width="1" height="1" fill="#d8b8b0"/><rect x="10" y="2" width="1" height="1" fill="#2a1414"/><rect x="0" y="3" width="1" height="1" fill="#1a0a0a"/><rect x="1" y="3" width="1" height="1" fill="#b08078"/><rect x="2" y="3" width="1" height="1" fill="#401818"/><rect x="3" y="3" width="1" height="1" fill="#5a3830"/><rect x="4" y="3" width="1" height="1" fill="#b08078"/><rect x="5" y="3" width="1" height="1" fill="#1a0a0a"/><rect x="6" y="3" width="1" height="1" fill="#8a5a50"/><rect x="7" y="3" width="1" height="1" fill="#c09088"/><rect x="8" y="3" width="1" height="1" fill="#401818"/><rect x="9" y="3" width="1" height="1" fill="#1a0a0a"/><rect x="10" y="3" width="1" height="1" fill="#b08078"/><rect x="0" y="4" width="1" height="1" fill="#8a5a50"/><rect x="1" y="4" width="1" height="1" fill="#c09088"/><rect x="2" y="4" width="1" height="1" fill="#c09088"/><rect x="3" y="4" width="1" height="1" fill="#d8b8b0"/><rect x="4" y="4" width="1" height="1" fill="#a05858"/><rect x="5" y="4" width="1" height="1" fill="#8a5a50"/><rect x="6" y="4" width="1" height="1" fill="#1a0a0a"/><rect x="7" y="4" width="1" height="1" fill="#8a5a50"/><rect x="8" y="4" width="1" height="1" fill="#c09088"/><rect x="9" y="4" width="1" height="1" fill="#2a1414"/><rect x="10" y="4" width="1" height="1" fill="#c09088"/><rect x="0" y="5" width="1" height="1" fill="#d8b8b0"/><rect x="1" y="5" width="1" height="1" fill="#705048"/><rect x="2" y="5" width="1" height="1" fill="#1a0a0a"/><rect x="3" y="5" width="1" height="1" fill="#5a3830"/><rect x="4" y="5" width="1" height="1" fill="#a05858"/><rect x="5" y="5" width="1" height="1" fill="#705048"/><rect x="6" y="5" width="1" height="1" fill="#c09088"/><rect x="7" y="5" width="1" height="1" fill="#705048"/><rect x="8" y="5" width="1" height="1" fill="#a05858"/><rect x="9" y="5" width="1" height="1" fill="#401818"/><rect x="10" y="5" width="1" height="1" fill="#d8b8b0"/><rect x="0" y="6" width="1" height="1" fill="#b08078"/><rect x="1" y="6" width="1" height="1" fill="#d8b8b0"/><rect x="2" y="6" width="1" height="1" fill="#8a5a50"/><rect x="3" y="6" width="1" height="1" fill="#c09088"/><rect x="4" y="6" width="1" height="1" fill="#401818"/><rect x="5" y="6" width="1" height="1" fill="#1a0a0a"/><rect x="6" y="6" width="1" height="1" fill="#705048"/><rect x="7" y="6" width="1" height="1" fill="#a05858"/><rect x="8" y="6" width="1" height="1" fill="#705048"/><rect x="9" y="6" width="1" height="1" fill="#401818"/><rect x="10" y="6" width="1" height="1" fill="#c09088"/><rect x="0" y="7" width="1" height="1" fill="#8a5a50"/><rect x="1" y="7" width="1" height="1" fill="#8a5a50"/><rect x="2" y="7" width="1" height="1" fill="#1a0a0a"/><rect x="3" y="7" width="1" height="1" fill="#5a3830"/><rect x="4" y="7" width="1" height="1" fill="#b08078"/><rect x="5" y="7" width="1" height="1" fill="#a05858"/><rect x="6" y="7" width="1" height="1" fill="#b08078"/><rect x="7" y="7" width="1" height="1" fill="#705048"/><rect x="8" y="7" width="1" height="1" fill="#5a3830"/><rect x="9" y="7" width="1" height="1" fill="#2a1414"/><rect x="10" y="7" width="1" height="1" fill="#8a5a50"/><rect x="0" y="8" width="1" height="1" fill="#1a0a0a"/><rect x="1" y="8" width="1" height="1" fill="#c09088"/><rect x="2" y="8" width="1" height="1" fill="#a05858"/><rect x="3" y="8" width="1" height="1" fill="#a05858"/><rect x="4" y="8" width="1" height="1" fill="#a05858"/><rect x="5" y="8" width="1" height="1" fill="#c09088"/><rect x="6" y="8" width="1" height="1" fill="#705048"/><rect x="7" y="8" width="1" height="1" fill="#c09088"/><rect x="8" y="8" width="1" height="1" fill="#705048"/><rect x="9" y="8" width="1" height="1" fill="#8a5a50"/><rect x="10" y="8" width="1" height="1" fill="#8a5a50"/><rect x="0" y="9" width="1" height="1" fill="#401818"/><rect x="1" y="9" width="1" height="1" fill="#705048"/><rect x="2" y="9" width="1" height="1" fill="#8a5a50"/><rect x="3" y="9" width="1" height="1" fill="#2a1414"/><rect x="4" y="9" width="1" height="1" fill="#401818"/><rect x="5" y="9" width="1" height="1" fill="#c09088"/><rect x="6" y="9" width="1" height="1" fill="#705048"/><rect x="7" y="9" width="1" height="1" fill="#401818"/><rect x="8" y="9" width="1" height="1" fill="#5a3830"/><rect x="9" y="9" width="1" height="1" fill="#a05858"/><rect x="10" y="9" width="1" height="1" fill="#2a1414"/><rect x="0" y="10" width="1" height="1" fill="#705048"/><rect x="1" y="10" width="1" height="1" fill="#a05858"/><rect x="2" y="10" width="1" height="1" fill="#b08078"/><rect x="3" y="10" width="1" height="1" fill="#c09088"/><rect x="4" y="10" width="1" height="1" fill="#8a5a50"/><rect x="5" y="10" width="1" height="1" fill="#705048"/><rect x="6" y="10" width="1" height="1" fill="#2a1414"/><rect x="7" y="10" width="1" height="1" fill="#d8b8b0"/><rect x="8" y="10" width="1" height="1" fill="#401818"/><rect x="9" y="10" width="1" height="1" fill="#b08078"/><rect x="10" y="10" width="1" height="1" fill="#d8b8b0"/><rect x="0" y="11" width="1" height="1" fill="#5a3830"/><rect x="1" y="11" width="1" height="1" fill="#5a3830"/><rect x="2" y="11" width="1" height="1" fill="#705048"/><rect x="3" y="11" width="1" height="1" fill="#8a5a50"/><rect x="4" y="11" width="1" height="1" fill="#b08078"/><rect x="5" y="11" width="1" height="1" fill="#705048"/><rect x="6" y="11" width="1" height="1" fill="#5a3830"/><rect x="7" y="11" width="1" height="1" fill="#1a0a0a"/><rect x="8" y="11" width="1" height="1" fill="#401818"/><rect x="9" y="11" width="1" height="1" fill="#b08078"/><rect x="10" y="11" width="1" height="1" fill="#5a3830"/><rect x="0" y="12" width="1" height="1" fill="#1a0a0a"/><rect x="1" y="12" width="1" height="1" fill="#401818"/><rect x="2" y="12" width="1" height="1" fill="#5a3830"/><rect x="3" y="12" width="1" height="1" fill="#a05858"/><rect x="4" y="12" width="1" height="1" fill="#5a3830"/><rect x="5" y="12" width="1" height="1" fill="#d8b8b0"/><rect x="6" y="12" width="1" height="1" fill="#b08078"/><rect x="7" y="12" width="1" height="1" fill="#8a5a50"/><rect x="8" y="12" width="1" height="1" fill="#b08078"/><rect x="9" y="12" width="1" height="1" fill="#b08078"/><rect x="10" y="12" width="1" height="1" fill="#d8b8b0"/><rect x="0" y="13" width="1" height="1" fill="#d8b8b0"/><rect x="1" y="13" width="1" height="1" fill="#2a1414"/><rect x="2" y="13" width="1" height="1" fill="#705048"/><rect x="3" y="13" width="1" height="1" fill="#c09088"/><rect x="4" y="13" width="1" height="1" fill="#b08078"/><rect x="5" y="13" width="1" height="1" fill="#401818"/><rect x="6" y="13" width="1" height="1" fill="#401818"/><rect x="7" y="13" width="1" height="1" fill="#2a1414"/><rect x="8" y="13" width="1" height="1" fill="#b08078"/><rect x="9" y="13" width="1" height="1" fill="#5a3830"/><rect x="10" y="13" width="1" height="1" fill="#1a0a0a"/><rect x="0" y="14" width="1" height="1" fill="#a05858"/><rect x="1" y="14" width="1" height="1" fill="#c09088"/><rect x="2" y="14" width="1" height="1" fill="#c09088"/><rect x="3" y="14" width="1" height="1" fill="#a05858"/><rect x="4" y="14" width="1" height="1" fill="#b08078"/><rect x="5" y="14" width="1" height="1" fill="#1a0a0a"/><rect x="6" y="14" width="1" height="1" fill="#c09088"/><rect x="7" y="14" width="1" height="1" fill="#2a1414"/><rect x="8" y="14" width="1" height="1" fill="#705048"/><rect x="9" y="14" width="1" height="1" fill="#1a0a0a"/><rect x="10" y="14" width="1" height="1" fill="#5a3830"/><rect x="0" y="15" width="1" height="1" fill="#5a3830"/><rect x="1" y="15" width="1" height="1" fill="#5a3830"/><rect x="2" y="15" width="1" height="1" fill="#5a3830"/><rect x="3" y="15" width="1" height="1" fill="#8a5a50"/><rect x="4" y="15" width="1" height="1" fill="#705048"/><rect x="5" y="15" width="1" height="1" fill="#5a3830"/><rect x="6" y="15" width="1" height="1" fill="#2a1414"/><rect x="7" y="15" width="1" height="1" fill="#d8b8b0"/><rect x="8" y="15" width="1" height="1" fill="#8a5a50"/><rect x="9" y="15" width="1" height="1" fill="#d8b8b0"/><rect x="10" y="15" width="1" height="1" fill="#705048"/><rect x="4" y="4" width="2" height="2" fill="#f0f0f0"/><rect x="4" y="9" width="2" height="2" fill="#e8e8e8"/><rect x="7" y="6" width="1" height="5" fill="#e8d8d8"/><rect x="3" y="12" width="4" height="2" fill="#c05060"/></svg></div>
<div class="t" style="left:1047px;top:113px;font-size:11px;color:#000;">4ukeH</div>
<svg class="a" style="left:1525px;top:114px" width="12" height="10"><path d="M1.5 2.5l4.5 4.5 4.5-4.5" fill="none" stroke="#444" stroke-width="1.1"/></svg>
<div class="a" style="left:855px;top:133px;width:793px;height:158px;background:#f0f0f0;border:1px solid #828790"></div>
<div class="a" style="left:1629px;top:134px;width:1px;height:156px;background:#fff"></div>
<div class="a" style="left:1630px;top:152px;width:15px;height:96px;background:#cdcdcd"></div>
<svg class="a" style="left:1630px;top:136px" width="16" height="14"><path d="M4.5 10.5l3.5-4 3.5 4" fill="none" stroke="#555" stroke-width="1.9"/></svg>
<svg class="a" style="left:1630px;top:274px" width="16" height="14"><path d="M4.5 4.5l3.5 4 3.5-4" fill="none" stroke="#555" stroke-width="1.9"/></svg>
<div class="t" style="left:862px;top:139px;font-size:11px;color:#000;">Right click</div>
<div class="t" style="left:1012px;top:139px;font-size:11px;color:#000;">2738</div>
<div class="a" style="left:1059px;top:142px;width:143px;height:4px;background:#000;box-shadow:0 0 0 1px #fff"></div>
<div class="t" style="left:862px;top:158px;font-size:11px;color:#000;">Select / deselect</div>
<div class="t" style="left:1012px;top:158px;font-size:11px;color:#000;">205</div>
<div class="a" style="left:1059px;top:161px;width:10px;height:4px;background:#000;box-shadow:0 0 0 1px #fff"></div>
<div class="t" style="left:862px;top:177px;font-size:11px;color:#000;">Select group hotkey</div>
<div class="t" style="left:1012px;top:177px;font-size:11px;color:#000;">551</div>
<div class="a" style="left:1059px;top:180px;width:28px;height:4px;background:#000;box-shadow:0 0 0 1px #fff"></div>
<div class="t" style="left:862px;top:196px;font-size:11px;color:#000;">Assign group hotkey</div>
<div class="t" style="left:1012px;top:196px;font-size:11px;color:#000;">3</div>
<div class="t" style="left:862px;top:215px;font-size:11px;color:#000;">Use ability</div>
<div class="t" style="left:1012px;top:215px;font-size:11px;color:#000;">92</div>
<div class="a" style="left:1059px;top:218px;width:4px;height:4px;background:#000;box-shadow:0 0 0 1px #fff"></div>
<div class="t" style="left:862px;top:234px;font-size:11px;color:#000;">Basic commands</div>
<div class="t" style="left:1012px;top:234px;font-size:11px;color:#000;">101</div>
<div class="a" style="left:1059px;top:237px;width:5px;height:4px;background:#000;box-shadow:0 0 0 1px #fff"></div>
<div class="t" style="left:862px;top:253px;font-size:11px;color:#000;">Select subgroup</div>
<div class="t" style="left:1012px;top:253px;font-size:11px;color:#000;">0</div>
<div class="t" style="left:862px;top:272px;font-size:11px;color:#000;">Give item / drop item</div>
<div class="t" style="left:1012px;top:272px;font-size:11px;color:#000;">0</div>
<div class="a" style="left:855px;top:296px;width:793px;height:369px;background:#fff;border:1px solid #828790"></div>
<div class="a" style="left:897px;top:298px;width:1px;height:23px;background:#e5e5e5"></div>
<div class="a" style="left:952px;top:298px;width:1px;height:23px;background:#e5e5e5"></div>
<div class="a" style="left:1645px;top:298px;width:1px;height:24px;background:#e5e5e5"></div>
<div class="t" style="left:863px;top:304px;font-size:11px;color:#000;">Group</div>
<div class="t" style="left:904px;top:304px;font-size:11px;color:#000;">Assigned</div>
<div class="t" style="left:958px;top:304px;font-size:11px;color:#000;">Used</div>
<div class="a" style="left:856px;top:338px;width:790px;height:1px;background:#f0f0f0"></div>
<div class="a" style="left:856px;top:355px;width:790px;height:1px;background:#f0f0f0"></div>
<div class="a" style="left:856px;top:372px;width:790px;height:1px;background:#f0f0f0"></div>
<div class="a" style="left:856px;top:389px;width:790px;height:1px;background:#f0f0f0"></div>
<div class="a" style="left:856px;top:406px;width:790px;height:1px;background:#f0f0f0"></div>
<div class="a" style="left:856px;top:423px;width:790px;height:1px;background:#f0f0f0"></div>
<div class="a" style="left:856px;top:440px;width:790px;height:1px;background:#f0f0f0"></div>
<div class="a" style="left:856px;top:457px;width:790px;height:1px;background:#f0f0f0"></div>
<div class="a" style="left:856px;top:474px;width:790px;height:1px;background:#f0f0f0"></div>
<div class="a" style="left:856px;top:491px;width:790px;height:1px;background:#f0f0f0"></div>
<div class="a" style="left:856px;top:508px;width:790px;height:1px;background:#f0f0f0"></div>
<div class="a" style="left:856px;top:525px;width:790px;height:1px;background:#f0f0f0"></div>
<div class="a" style="left:856px;top:542px;width:790px;height:1px;background:#f0f0f0"></div>
<div class="a" style="left:856px;top:559px;width:790px;height:1px;background:#f0f0f0"></div>
<div class="a" style="left:856px;top:576px;width:790px;height:1px;background:#f0f0f0"></div>
<div class="a" style="left:856px;top:593px;width:790px;height:1px;background:#f0f0f0"></div>
<div class="a" style="left:856px;top:610px;width:790px;height:1px;background:#f0f0f0"></div>
<div class="a" style="left:856px;top:627px;width:790px;height:1px;background:#f0f0f0"></div>
<div class="a" style="left:856px;top:644px;width:790px;height:1px;background:#f0f0f0"></div>
<div class="a" style="left:856px;top:661px;width:790px;height:1px;background:#f0f0f0"></div>
<div class="a" style="left:898px;top:322px;width:1px;height:341px;background:#f0f0f0"></div>
<div class="a" style="left:953px;top:322px;width:1px;height:341px;background:#f0f0f0"></div>
<div class="t" style="left:863px;top:325px;font-size:11px;color:#000;">1</div>
<div class="t" style="left:904px;top:325px;font-size:11px;color:#000;">2</div>
<div class="t" style="left:959px;top:325px;font-size:11px;color:#000;">498</div>
<div class="t" style="left:863px;top:342px;font-size:11px;color:#000;">2</div>
<div class="t" style="left:904px;top:342px;font-size:11px;color:#000;">1</div>
<div class="t" style="left:959px;top:342px;font-size:11px;color:#000;">53</div>
<div class="t" style="left:857px;top:672px;font-size:11px;color:#000;">Longest AFK period: -0:00 (from 53:53 to 53:53)</div>
<div class="a" style="left:610px;top:693px;width:1279px;height:351px;border-top:1px solid #f4f4f4;border-left:1px solid #f4f4f4"></div>
<div class="a" style="left:611px;top:694px;width:1277px;height:349px;background:#fff;border-top:1px solid #a0a0a0;border-left:1px solid #a0a0a0;border-right:1px solid #e3e3e3;border-bottom:1px solid #e3e3e3"></div>
<div class="a" style="left:612px;top:695px;width:1275px;height:347px;border-top:1px solid #696969;border-left:1px solid #696969"></div>
<svg class="a" style="left:0;top:0" width="1920" height="1080" shape-rendering="crispEdges"><path d="M649.5 1002V1022M651.5 1002V1022M653.5 992V1022M655.5 908V1022M657.5 791V1022M663.5 992V1022M665.5 855V1022M667.5 981V1022M669.5 992V1022M671.5 865V1022M673.5 939V1022M675.5 908V1022M677.5 1002V1022M679.5 992V1022M681.5 960V1022M683.5 950V1022M685.5 939V1022M687.5 929V1022M689.5 992V1022M691.5 971V1022M693.5 1002V1022M695.5 960V1022M697.5 813V1022M699.5 929V1022M701.5 876V1022M703.5 971V1022M705.5 1002V1022M711.5 950V1022M713.5 939V1022M715.5 886V1022M717.5 908V1022M719.5 971V1022M721.5 981V1022M725.5 1002V1022M727.5 918V1022M729.5 876V1022M731.5 876V1022M733.5 908V1022M735.5 939V1022M737.5 950V1022M739.5 960V1022M741.5 939V1022M743.5 897V1022M745.5 929V1022M747.5 971V1022M751.5 1002V1022M753.5 855V1022M759.5 971V1022M767.5 981V1022M769.5 802V1022M775.5 1002V1022M777.5 929V1022M779.5 950V1022M781.5 939V1022M783.5 886V1022M785.5 971V1022M787.5 992V1022M789.5 939V1022M791.5 981V1022M793.5 865V1022M795.5 897V1022M797.5 960V1022M799.5 1002V1022M801.5 1013V1022M803.5 855V1022M805.5 992V1022M807.5 960V1022M809.5 1002V1022M811.5 802V1022M813.5 739V1022M815.5 802V1022M817.5 950V1022M819.5 1013V1022M821.5 1002V1022M823.5 981V1022M825.5 929V1022M827.5 908V1022M829.5 992V1022M831.5 939V1022M833.5 855V1022M835.5 939V1022M837.5 908V1022M839.5 855V1022M841.5 950V1022M843.5 971V1022M849.5 939V1022M851.5 813V1022M853.5 960V1022M855.5 1013V1022M857.5 992V1022M859.5 865V1022M861.5 855V1022M863.5 1002V1022M865.5 950V1022M867.5 908V1022M869.5 876V1022M871.5 802V1022M873.5 813V1022M875.5 802V1022M877.5 781V1022M879.5 971V1022M883.5 992V1022M885.5 1013V1022M887.5 1013V1022M889.5 981V1022M891.5 981V1022M895.5 971V1022M897.5 876V1022M899.5 897V1022M901.5 876V1022M903.5 929V1022M905.5 939V1022M907.5 950V1022M909.5 876V1022M911.5 855V1022M913.5 992V1022M915.5 844V1022M917.5 844V1022M919.5 770V1022M921.5 791V1022M923.5 707V1022M925.5 855V1022M927.5 981V1022M929.5 1013V1022M935.5 981V1022M937.5 1002V1022M939.5 971V1022M941.5 960V1022M943.5 981V1022M945.5 918V1022M947.5 908V1022M949.5 939V1022M951.5 929V1022M953.5 971V1022M955.5 749V1022M957.5 749V1022M959.5 781V1022M961.5 802V1022M963.5 876V1022M965.5 823V1022M967.5 886V1022M969.5 1013V1022M971.5 844V1022M973.5 876V1022M979.5 992V1022M987.5 1002V1022M993.5 886V1022M995.5 1002V1022M997.5 908V1022M999.5 1002V1022M1001.5 844V1022M1003.5 865V1022M1005.5 728V1022M1007.5 855V1022M1009.5 844V1022M1011.5 908V1022M1013.5 939V1022M1015.5 897V1022M1017.5 981V1022M1019.5 960V1022M1021.5 960V1022M1023.5 802V1022M1025.5 939V1022M1027.5 844V1022M1029.5 886V1022M1031.5 865V1022M1033.5 897V1022M1035.5 781V1022M1037.5 791V1022M1039.5 886V1022M1041.5 886V1022M1043.5 844V1022M1045.5 844V1022M1047.5 897V1022M1049.5 908V1022M1051.5 844V1022M1053.5 950V1022M1055.5 813V1022M1057.5 981V1022M1059.5 855V1022M1061.5 855V1022M1063.5 791V1022M1065.5 908V1022M1067.5 876V1022M1069.5 770V1022M1071.5 844V1022M1073.5 876V1022M1075.5 739V1022M1077.5 749V1022M1079.5 886V1022M1081.5 981V1022M1097.5 1013V1022M1099.5 802V1022M1101.5 918V1022M1103.5 992V1022M1105.5 908V1022M1107.5 718V1022M1109.5 929V1022M1111.5 855V1022M1113.5 971V1022M1115.5 929V1022M1117.5 865V1022M1119.5 918V1022M1121.5 939V1022M1123.5 908V1022M1125.5 950V1022M1143.5 960V1022M1145.5 960V1022M1147.5 865V1022M1149.5 844V1022M1151.5 960V1022M1153.5 971V1022M1155.5 855V1022M1157.5 791V1022M1159.5 939V1022M1161.5 929V1022M1163.5 981V1022M1165.5 908V1022M1167.5 791V1022M1169.5 897V1022M1171.5 908V1022M1175.5 950V1022M1193.5 1013V1022M1201.5 886V1022M1203.5 865V1022M1207.5 908V1022M1209.5 865V1022M1211.5 855V1022M1213.5 1002V1022M1215.5 876V1022M1217.5 929V1022M1219.5 855V1022M1221.5 950V1022M1223.5 897V1022M1225.5 918V1022M1227.5 844V1022M1229.5 781V1022M1231.5 844V1022M1251.5 1013V1022M1253.5 918V1022M1255.5 950V1022M1257.5 791V1022M1259.5 886V1022M1261.5 813V1022M1263.5 1013V1022M1267.5 918V1022M1269.5 886V1022M1275.5 929V1022M1277.5 950V1022M1279.5 855V1022M1281.5 876V1022M1283.5 855V1022M1285.5 918V1022M1287.5 865V1022M1289.5 791V1022M1305.5 992V1022M1307.5 1002V1022M1311.5 865V1022M1313.5 897V1022M1315.5 971V1022M1319.5 897V1022M1321.5 918V1022M1323.5 823V1022M1325.5 1002V1022M1327.5 886V1022M1329.5 950V1022M1331.5 1002V1022M1335.5 897V1022M1337.5 897V1022M1339.5 855V1022M1341.5 886V1022M1343.5 876V1022M1345.5 886V1022M1347.5 1002V1022M1349.5 981V1022M1357.5 1013V1022M1361.5 992V1022M1363.5 971V1022M1369.5 1002V1022M1371.5 950V1022M1373.5 950V1022M1375.5 939V1022M1377.5 813V1022M1379.5 855V1022M1381.5 971V1022M1383.5 781V1022M1385.5 791V1022M1387.5 876V1022M1389.5 908V1022M1391.5 1002V1022M1393.5 1013V1022M1411.5 929V1022M1413.5 929V1022M1415.5 950V1022M1417.5 960V1022M1419.5 865V1022M1421.5 834V1022M1423.5 823V1022M1425.5 886V1022M1427.5 908V1022M1429.5 844V1022M1431.5 1002V1022M1433.5 992V1022M1437.5 992V1022M1441.5 992V1022M1449.5 1002V1022M1451.5 960V1022M1453.5 823V1022M1455.5 897V1022M1457.5 981V1022M1459.5 1002V1022M1461.5 823V1022M1463.5 802V1022M1465.5 865V1022M1469.5 929V1022M1471.5 929V1022M1473.5 876V1022M1475.5 739V1022M1477.5 823V1022M1479.5 844V1022M1481.5 950V1022M1483.5 981V1022M1485.5 1013V1022M1505.5 981V1022M1507.5 929V1022M1509.5 813V1022M1511.5 844V1022M1513.5 876V1022M1515.5 813V1022M1517.5 844V1022M1519.5 981V1022M1521.5 929V1022M1523.5 876V1022M1525.5 876V1022M1527.5 876V1022M1529.5 813V1022M1531.5 760V1022M1533.5 918V1022M1535.5 823V1022M1537.5 886V1022M1767.5 1013V1022M1791.5 1013V1022M1885.5 1013V1022" stroke="#000" stroke-width="1" fill="none"/><path d="M643.5 696V1022.5H1886" stroke="#000" stroke-width="1" fill="none"/></svg>
<div class="a" style="left:613px;top:696px;width:1273px;height:346px;overflow:hidden"><svg class="a" style="left:-613px;top:-696px" width="1920" height="1080"><g fill="none" stroke="#000" stroke-width="1"><path transform="translate(634,1026)" d="M1.5 -5.5H4.5Q5.5 -5.5 5.5 -4V-2Q5.5 -0.5 4.5 -0.5H1.5Q0.5 -0.5 0.5 -2V-4Q0.5 -5.5 1.5 -5.5Z"/><path transform="translate(625,1007)" d="M0.5 -4.8Q1.5 -5.5 3.5 -5.5Q6 -5.5 6 -4.2Q6 -3 3.5 -2.4Q1 -1.8 0.5 -0.5H6.5"/><path transform="translate(634,1007)" d="M1.5 -5.5H4.5Q5.5 -5.5 5.5 -4V-2Q5.5 -0.5 4.5 -0.5H1.5Q0.5 -0.5 0.5 -2V-4Q0.5 -5.5 1.5 -5.5Z"/><path transform="translate(625,988)" d="M5.5 1.5V-5.5L0.5 -0.5H7.5"/><path transform="translate(634,988)" d="M1.5 -5.5H4.5Q5.5 -5.5 5.5 -4V-2Q5.5 -0.5 4.5 -0.5H1.5Q0.5 -0.5 0.5 -2V-4Q0.5 -5.5 1.5 -5.5Z"/><path transform="translate(626,969)" d="M5 -8.5Q0.5 -7.8 0.5 -3Q0.5 -0.5 3 -0.5Q5.5 -0.5 5.5 -2.6Q5.5 -4.6 3.1 -4.6Q1.4 -4.6 0.6 -3.4"/><path transform="translate(634,969)" d="M1.5 -5.5H4.5Q5.5 -5.5 5.5 -4V-2Q5.5 -0.5 4.5 -0.5H1.5Q0.5 -0.5 0.5 -2V-4Q0.5 -5.5 1.5 -5.5Z"/><path transform="translate(626,950)" d="M3 -4.6Q0.8 -4.6 0.8 -6.6Q0.8 -8.5 3 -8.5Q5.2 -8.5 5.2 -6.6Q5.2 -4.6 3 -4.6Q0.5 -4.6 0.5 -2.5Q0.5 -0.5 3 -0.5Q5.5 -0.5 5.5 -2.5Q5.5 -4.6 3 -4.6Z"/><path transform="translate(634,950)" d="M1.5 -5.5H4.5Q5.5 -5.5 5.5 -4V-2Q5.5 -0.5 4.5 -0.5H1.5Q0.5 -0.5 0.5 -2V-4Q0.5 -5.5 1.5 -5.5Z"/><path transform="translate(619,931)" d="M0.5 -4.5L2.5 -5.5V-0.5M0.5 -0.5H4.5"/><path transform="translate(626,931)" d="M1.5 -5.5H4.5Q5.5 -5.5 5.5 -4V-2Q5.5 -0.5 4.5 -0.5H1.5Q0.5 -0.5 0.5 -2V-4Q0.5 -5.5 1.5 -5.5Z"/><path transform="translate(634,931)" d="M1.5 -5.5H4.5Q5.5 -5.5 5.5 -4V-2Q5.5 -0.5 4.5 -0.5H1.5Q0.5 -0.5 0.5 -2V-4Q0.5 -5.5 1.5 -5.5Z"/><path transform="translate(618,912)" d="M0.5 -4.5L2.5 -5.5V-0.5M0.5 -0.5H4.5"/><path transform="translate(625,912)" d="M0.5 -4.8Q1.5 -5.5 3.5 -5.5Q6 -5.5 6 -4.2Q6 -3 3.5 -2.4Q1 -1.8 0.5 -0.5H6.5"/><path transform="translate(634,912)" d="M1.5 -5.5H4.5Q5.5 -5.5 5.5 -4V-2Q5.5 -0.5 4.5 -0.5H1.5Q0.5 -0.5 0.5 -2V-4Q0.5 -5.5 1.5 -5.5Z"/><path transform="translate(618,893)" d="M0.5 -4.5L2.5 -5.5V-0.5M0.5 -0.5H4.5"/><path transform="translate(625,893)" d="M5.5 1.5V-5.5L0.5 -0.5H7.5"/><path transform="translate(634,893)" d="M1.5 -5.5H4.5Q5.5 -5.5 5.5 -4V-2Q5.5 -0.5 4.5 -0.5H1.5Q0.5 -0.5 0.5 -2V-4Q0.5 -5.5 1.5 -5.5Z"/><path transform="translate(619,874)" d="M0.5 -4.5L2.5 -5.5V-0.5M0.5 -0.5H4.5"/><path transform="translate(626,874)" d="M5 -8.5Q0.5 -7.8 0.5 -3Q0.5 -0.5 3 -0.5Q5.5 -0.5 5.5 -2.6Q5.5 -4.6 3.1 -4.6Q1.4 -4.6 0.6 -3.4"/><path transform="translate(634,874)" d="M1.5 -5.5H4.5Q5.5 -5.5 5.5 -4V-2Q5.5 -0.5 4.5 -0.5H1.5Q0.5 -0.5 0.5 -2V-4Q0.5 -5.5 1.5 -5.5Z"/><path transform="translate(619,855)" d="M0.5 -4.5L2.5 -5.5V-0.5M0.5 -0.5H4.5"/><path transform="translate(626,855)" d="M3 -4.6Q0.8 -4.6 0.8 -6.6Q0.8 -8.5 3 -8.5Q5.2 -8.5 5.2 -6.6Q5.2 -4.6 3 -4.6Q0.5 -4.6 0.5 -2.5Q0.5 -0.5 3 -0.5Q5.5 -0.5 5.5 -2.5Q5.5 -4.6 3 -4.6Z"/><path transform="translate(634,855)" d="M1.5 -5.5H4.5Q5.5 -5.5 5.5 -4V-2Q5.5 -0.5 4.5 -0.5H1.5Q0.5 -0.5 0.5 -2V-4Q0.5 -5.5 1.5 -5.5Z"/><path transform="translate(617,836)" d="M0.5 -4.8Q1.5 -5.5 3.5 -5.5Q6 -5.5 6 -4.2Q6 -3 3.5 -2.4Q1 -1.8 0.5 -0.5H6.5"/><path transform="translate(626,836)" d="M1.5 -5.5H4.5Q5.5 -5.5 5.5 -4V-2Q5.5 -0.5 4.5 -0.5H1.5Q0.5 -0.5 0.5 -2V-4Q0.5 -5.5 1.5 -5.5Z"/><path transform="translate(634,836)" d="M1.5 -5.5H4.5Q5.5 -5.5 5.5 -4V-2Q5.5 -0.5 4.5 -0.5H1.5Q0.5 -0.5 0.5 -2V-4Q0.5 -5.5 1.5 -5.5Z"/><path transform="translate(616,817)" d="M0.5 -4.8Q1.5 -5.5 3.5 -5.5Q6 -5.5 6 -4.2Q6 -3 3.5 -2.4Q1 -1.8 0.5 -0.5H6.5"/><path transform="translate(625,817)" d="M0.5 -4.8Q1.5 -5.5 3.5 -5.5Q6 -5.5 6 -4.2Q6 -3 3.5 -2.4Q1 -1.8 0.5 -0.5H6.5"/><path transform="translate(634,817)" d="M1.5 -5.5H4.5Q5.5 -5.5 5.5 -4V-2Q5.5 -0.5 4.5 -0.5H1.5Q0.5 -0.5 0.5 -2V-4Q0.5 -5.5 1.5 -5.5Z"/><path transform="translate(616,798)" d="M0.5 -4.8Q1.5 -5.5 3.5 -5.5Q6 -5.5 6 -4.2Q6 -3 3.5 -2.4Q1 -1.8 0.5 -0.5H6.5"/><path transform="translate(625,798)" d="M5.5 1.5V-5.5L0.5 -0.5H7.5"/><path transform="translate(634,798)" d="M1.5 -5.5H4.5Q5.5 -5.5 5.5 -4V-2Q5.5 -0.5 4.5 -0.5H1.5Q0.5 -0.5 0.5 -2V-4Q0.5 -5.5 1.5 -5.5Z"/><path transform="translate(617,779)" d="M0.5 -4.8Q1.5 -5.5 3.5 -5.5Q6 -5.5 6 -4.2Q6 -3 3.5 -2.4Q1 -1.8 0.5 -0.5H6.5"/><path transform="translate(626,779)" d="M5 -8.5Q0.5 -7.8 0.5 -3Q0.5 -0.5 3 -0.5Q5.5 -0.5 5.5 -2.6Q5.5 -4.6 3.1 -4.6Q1.4 -4.6 0.6 -3.4"/><path transform="translate(634,779)" d="M1.5 -5.5H4.5Q5.5 -5.5 5.5 -4V-2Q5.5 -0.5 4.5 -0.5H1.5Q0.5 -0.5 0.5 -2V-4Q0.5 -5.5 1.5 -5.5Z"/><path transform="translate(617,760)" d="M0.5 -4.8Q1.5 -5.5 3.5 -5.5Q6 -5.5 6 -4.2Q6 -3 3.5 -2.4Q1 -1.8 0.5 -0.5H6.5"/><path transform="translate(626,760)" d="M3 -4.6Q0.8 -4.6 0.8 -6.6Q0.8 -8.5 3 -8.5Q5.2 -8.5 5.2 -6.6Q5.2 -4.6 3 -4.6Q0.5 -4.6 0.5 -2.5Q0.5 -0.5 3 -0.5Q5.5 -0.5 5.5 -2.5Q5.5 -4.6 3 -4.6Z"/><path transform="translate(634,760)" d="M1.5 -5.5H4.5Q5.5 -5.5 5.5 -4V-2Q5.5 -0.5 4.5 -0.5H1.5Q0.5 -0.5 0.5 -2V-4Q0.5 -5.5 1.5 -5.5Z"/><path transform="translate(618,741)" d="M0.8 -4.9Q1.5 -5.5 3 -5.5Q5.5 -5.5 5.5 -4.1Q5.5 -2.7 3 -2.7Q6 -2.7 6 -0.6Q6 1.5 3 1.5Q1.3 1.5 0.5 0.8"/><path transform="translate(626,741)" d="M1.5 -5.5H4.5Q5.5 -5.5 5.5 -4V-2Q5.5 -0.5 4.5 -0.5H1.5Q0.5 -0.5 0.5 -2V-4Q0.5 -5.5 1.5 -5.5Z"/><path transform="translate(634,741)" d="M1.5 -5.5H4.5Q5.5 -5.5 5.5 -4V-2Q5.5 -0.5 4.5 -0.5H1.5Q0.5 -0.5 0.5 -2V-4Q0.5 -5.5 1.5 -5.5Z"/><path transform="translate(617,722)" d="M0.8 -4.9Q1.5 -5.5 3 -5.5Q5.5 -5.5 5.5 -4.1Q5.5 -2.7 3 -2.7Q6 -2.7 6 -0.6Q6 1.5 3 1.5Q1.3 1.5 0.5 0.8"/><path transform="translate(625,722)" d="M0.5 -4.8Q1.5 -5.5 3.5 -5.5Q6 -5.5 6 -4.2Q6 -3 3.5 -2.4Q1 -1.8 0.5 -0.5H6.5"/><path transform="translate(634,722)" d="M1.5 -5.5H4.5Q5.5 -5.5 5.5 -4V-2Q5.5 -0.5 4.5 -0.5H1.5Q0.5 -0.5 0.5 -2V-4Q0.5 -5.5 1.5 -5.5Z"/><path transform="translate(617,703)" d="M0.8 -4.9Q1.5 -5.5 3 -5.5Q5.5 -5.5 5.5 -4.1Q5.5 -2.7 3 -2.7Q6 -2.7 6 -0.6Q6 1.5 3 1.5Q1.3 1.5 0.5 0.8"/><path transform="translate(625,703)" d="M5.5 1.5V-5.5L0.5 -0.5H7.5"/><path transform="translate(634,703)" d="M1.5 -5.5H4.5Q5.5 -5.5 5.5 -4V-2Q5.5 -0.5 4.5 -0.5H1.5Q0.5 -0.5 0.5 -2V-4Q0.5 -5.5 1.5 -5.5Z"/><path transform="translate(664,1038)" d="M1.5 -5.5H4.5Q5.5 -5.5 5.5 -4V-2Q5.5 -0.5 4.5 -0.5H1.5Q0.5 -0.5 0.5 -2V-4Q0.5 -5.5 1.5 -5.5Z"/><path transform="translate(676,1038)" d="M1.5 -5.5H4.5Q5.5 -5.5 5.5 -4V-2Q5.5 -0.5 4.5 -0.5H1.5Q0.5 -0.5 0.5 -2V-4Q0.5 -5.5 1.5 -5.5Z"/><path transform="translate(684,1038)" d="M1.5 -5.5H4.5Q5.5 -5.5 5.5 -4V-2Q5.5 -0.5 4.5 -0.5H1.5Q0.5 -0.5 0.5 -2V-4Q0.5 -5.5 1.5 -5.5Z"/><path transform="translate(708,1038)" d="M0.5 -4.8Q1.5 -5.5 3.5 -5.5Q6 -5.5 6 -4.2Q6 -3 3.5 -2.4Q1 -1.8 0.5 -0.5H6.5"/><path transform="translate(721,1038)" d="M1.5 -5.5H4.5Q5.5 -5.5 5.5 -4V-2Q5.5 -0.5 4.5 -0.5H1.5Q0.5 -0.5 0.5 -2V-4Q0.5 -5.5 1.5 -5.5Z"/><path transform="translate(729,1038)" d="M1.5 -5.5H4.5Q5.5 -5.5 5.5 -4V-2Q5.5 -0.5 4.5 -0.5H1.5Q0.5 -0.5 0.5 -2V-4Q0.5 -5.5 1.5 -5.5Z"/><path transform="translate(753,1038)" d="M5.5 1.5V-5.5L0.5 -0.5H7.5"/><path transform="translate(766,1038)" d="M1.5 -5.5H4.5Q5.5 -5.5 5.5 -4V-2Q5.5 -0.5 4.5 -0.5H1.5Q0.5 -0.5 0.5 -2V-4Q0.5 -5.5 1.5 -5.5Z"/><path transform="translate(774,1038)" d="M1.5 -5.5H4.5Q5.5 -5.5 5.5 -4V-2Q5.5 -0.5 4.5 -0.5H1.5Q0.5 -0.5 0.5 -2V-4Q0.5 -5.5 1.5 -5.5Z"/><path transform="translate(798,1038)" d="M5 -8.5Q0.5 -7.8 0.5 -3Q0.5 -0.5 3 -0.5Q5.5 -0.5 5.5 -2.6Q5.5 -4.6 3.1 -4.6Q1.4 -4.6 0.6 -3.4"/><path transform="translate(810,1038)" d="M1.5 -5.5H4.5Q5.5 -5.5 5.5 -4V-2Q5.5 -0.5 4.5 -0.5H1.5Q0.5 -0.5 0.5 -2V-4Q0.5 -5.5 1.5 -5.5Z"/><path transform="translate(818,1038)" d="M1.5 -5.5H4.5Q5.5 -5.5 5.5 -4V-2Q5.5 -0.5 4.5 -0.5H1.5Q0.5 -0.5 0.5 -2V-4Q0.5 -5.5 1.5 -5.5Z"/><path transform="translate(843,1038)" d="M3 -4.6Q0.8 -4.6 0.8 -6.6Q0.8 -8.5 3 -8.5Q5.2 -8.5 5.2 -6.6Q5.2 -4.6 3 -4.6Q0.5 -4.6 0.5 -2.5Q0.5 -0.5 3 -0.5Q5.5 -0.5 5.5 -2.5Q5.5 -4.6 3 -4.6Z"/><path transform="translate(855,1038)" d="M1.5 -5.5H4.5Q5.5 -5.5 5.5 -4V-2Q5.5 -0.5 4.5 -0.5H1.5Q0.5 -0.5 0.5 -2V-4Q0.5 -5.5 1.5 -5.5Z"/><path transform="translate(863,1038)" d="M1.5 -5.5H4.5Q5.5 -5.5 5.5 -4V-2Q5.5 -0.5 4.5 -0.5H1.5Q0.5 -0.5 0.5 -2V-4Q0.5 -5.5 1.5 -5.5Z"/><path transform="translate(884,1038)" d="M0.5 -4.5L2.5 -5.5V-0.5M0.5 -0.5H4.5"/><path transform="translate(891,1038)" d="M1.5 -5.5H4.5Q5.5 -5.5 5.5 -4V-2Q5.5 -0.5 4.5 -0.5H1.5Q0.5 -0.5 0.5 -2V-4Q0.5 -5.5 1.5 -5.5Z"/><path transform="translate(903,1038)" d="M1.5 -5.5H4.5Q5.5 -5.5 5.5 -4V-2Q5.5 -0.5 4.5 -0.5H1.5Q0.5 -0.5 0.5 -2V-4Q0.5 -5.5 1.5 -5.5Z"/><path transform="translate(911,1038)" d="M1.5 -5.5H4.5Q5.5 -5.5 5.5 -4V-2Q5.5 -0.5 4.5 -0.5H1.5Q0.5 -0.5 0.5 -2V-4Q0.5 -5.5 1.5 -5.5Z"/><path transform="translate(929,1038)" d="M0.5 -4.5L2.5 -5.5V-0.5M0.5 -0.5H4.5"/><path transform="translate(936,1038)" d="M0.5 -4.8Q1.5 -5.5 3.5 -5.5Q6 -5.5 6 -4.2Q6 -3 3.5 -2.4Q1 -1.8 0.5 -0.5H6.5"/><path transform="translate(949,1038)" d="M1.5 -5.5H4.5Q5.5 -5.5 5.5 -4V-2Q5.5 -0.5 4.5 -0.5H1.5Q0.5 -0.5 0.5 -2V-4Q0.5 -5.5 1.5 -5.5Z"/><path transform="translate(957,1038)" d="M1.5 -5.5H4.5Q5.5 -5.5 5.5 -4V-2Q5.5 -0.5 4.5 -0.5H1.5Q0.5 -0.5 0.5 -2V-4Q0.5 -5.5 1.5 -5.5Z"/><path transform="translate(974,1038)" d="M0.5 -4.5L2.5 -5.5V-0.5M0.5 -0.5H4.5"/><path transform="translate(981,1038)" d="M5.5 1.5V-5.5L0.5 -0.5H7.5"/><path transform="translate(994,1038)" d="M1.5 -5.5H4.5Q5.5 -5.5 5.5 -4V-2Q5.5 -0.5 4.5 -0.5H1.5Q0.5 -0.5 0.5 -2V-4Q0.5 -5.5 1.5 -5.5Z"/><path transform="translate(1002,1038)" d="M1.5 -5.5H4.5Q5.5 -5.5 5.5 -4V-2Q5.5 -0.5 4.5 -0.5H1.5Q0.5 -0.5 0.5 -2V-4Q0.5 -5.5 1.5 -5.5Z"/><path transform="translate(1019,1038)" d="M0.5 -4.5L2.5 -5.5V-0.5M0.5 -0.5H4.5"/><path transform="translate(1026,1038)" d="M5 -8.5Q0.5 -7.8 0.5 -3Q0.5 -0.5 3 -0.5Q5.5 -0.5 5.5 -2.6Q5.5 -4.6 3.1 -4.6Q1.4 -4.6 0.6 -3.4"/><path transform="translate(1038,1038)" d="M1.5 -5.5H4.5Q5.5 -5.5 5.5 -4V-2Q5.5 -0.5 4.5 -0.5H1.5Q0.5 -0.5 0.5 -2V-4Q0.5 -5.5 1.5 -5.5Z"/><path transform="translate(1046,1038)" d="M1.5 -5.5H4.5Q5.5 -5.5 5.5 -4V-2Q5.5 -0.5 4.5 -0.5H1.5Q0.5 -0.5 0.5 -2V-4Q0.5 -5.5 1.5 -5.5Z"/><path transform="translate(1064,1038)" d="M0.5 -4.5L2.5 -5.5V-0.5M0.5 -0.5H4.5"/><path transform="translate(1071,1038)" d="M3 -4.6Q0.8 -4.6 0.8 -6.6Q0.8 -8.5 3 -8.5Q5.2 -8.5 5.2 -6.6Q5.2 -4.6 3 -4.6Q0.5 -4.6 0.5 -2.5Q0.5 -0.5 3 -0.5Q5.5 -0.5 5.5 -2.5Q5.5 -4.6 3 -4.6Z"/><path transform="translate(1083,1038)" d="M1.5 -5.5H4.5Q5.5 -5.5 5.5 -4V-2Q5.5 -0.5 4.5 -0.5H1.5Q0.5 -0.5 0.5 -2V-4Q0.5 -5.5 1.5 -5.5Z"/><path transform="translate(1091,1038)" d="M1.5 -5.5H4.5Q5.5 -5.5 5.5 -4V-2Q5.5 -0.5 4.5 -0.5H1.5Q0.5 -0.5 0.5 -2V-4Q0.5 -5.5 1.5 -5.5Z"/><path transform="translate(1108,1038)" d="M0.5 -4.8Q1.5 -5.5 3.5 -5.5Q6 -5.5 6 -4.2Q6 -3 3.5 -2.4Q1 -1.8 0.5 -0.5H6.5"/><path transform="translate(1117,1038)" d="M1.5 -5.5H4.5Q5.5 -5.5 5.5 -4V-2Q5.5 -0.5 4.5 -0.5H1.5Q0.5 -0.5 0.5 -2V-4Q0.5 -5.5 1.5 -5.5Z"/><path transform="translate(1129,1038)" d="M1.5 -5.5H4.5Q5.5 -5.5 5.5 -4V-2Q5.5 -0.5 4.5 -0.5H1.5Q0.5 -0.5 0.5 -2V-4Q0.5 -5.5 1.5 -5.5Z"/><path transform="translate(1137,1038)" d="M1.5 -5.5H4.5Q5.5 -5.5 5.5 -4V-2Q5.5 -0.5 4.5 -0.5H1.5Q0.5 -0.5 0.5 -2V-4Q0.5 -5.5 1.5 -5.5Z"/><path transform="translate(1152,1038)" d="M0.5 -4.8Q1.5 -5.5 3.5 -5.5Q6 -5.5 6 -4.2Q6 -3 3.5 -2.4Q1 -1.8 0.5 -0.5H6.5"/><path transform="translate(1161,1038)" d="M0.5 -4.8Q1.5 -5.5 3.5 -5.5Q6 -5.5 6 -4.2Q6 -3 3.5 -2.4Q1 -1.8 0.5 -0.5H6.5"/><path transform="translate(1174,1038)" d="M1.5 -5.5H4.5Q5.5 -5.5 5.5 -4V-2Q5.5 -0.5 4.5 -0.5H1.5Q0.5 -0.5 0.5 -2V-4Q0.5 -5.5 1.5 -5.5Z"/><path transform="translate(1182,1038)" d="M1.5 -5.5H4.5Q5.5 -5.5 5.5 -4V-2Q5.5 -0.5 4.5 -0.5H1.5Q0.5 -0.5 0.5 -2V-4Q0.5 -5.5 1.5 -5.5Z"/><path transform="translate(1197,1038)" d="M0.5 -4.8Q1.5 -5.5 3.5 -5.5Q6 -5.5 6 -4.2Q6 -3 3.5 -2.4Q1 -1.8 0.5 -0.5H6.5"/><path transform="translate(1206,1038)" d="M5.5 1.5V-5.5L0.5 -0.5H7.5"/><path transform="translate(1219,1038)" d="M1.5 -5.5H4.5Q5.5 -5.5 5.5 -4V-2Q5.5 -0.5 4.5 -0.5H1.5Q0.5 -0.5 0.5 -2V-4Q0.5 -5.5 1.5 -5.5Z"/><path transform="translate(1227,1038)" d="M1.5 -5.5H4.5Q5.5 -5.5 5.5 -4V-2Q5.5 -0.5 4.5 -0.5H1.5Q0.5 -0.5 0.5 -2V-4Q0.5 -5.5 1.5 -5.5Z"/><path transform="translate(1242,1038)" d="M0.5 -4.8Q1.5 -5.5 3.5 -5.5Q6 -5.5 6 -4.2Q6 -3 3.5 -2.4Q1 -1.8 0.5 -0.5H6.5"/><path transform="translate(1251,1038)" d="M5 -8.5Q0.5 -7.8 0.5 -3Q0.5 -0.5 3 -0.5Q5.5 -0.5 5.5 -2.6Q5.5 -4.6 3.1 -4.6Q1.4 -4.6 0.6 -3.4"/><path transform="translate(1263,1038)" d="M1.5 -5.5H4.5Q5.5 -5.5 5.5 -4V-2Q5.5 -0.5 4.5 -0.5H1.5Q0.5 -0.5 0.5 -2V-4Q0.5 -5.5 1.5 -5.5Z"/><path transform="translate(1271,1038)" d="M1.5 -5.5H4.5Q5.5 -5.5 5.5 -4V-2Q5.5 -0.5 4.5 -0.5H1.5Q0.5 -0.5 0.5 -2V-4Q0.5 -5.5 1.5 -5.5Z"/><path transform="translate(1287,1038)" d="M0.5 -4.8Q1.5 -5.5 3.5 -5.5Q6 -5.5 6 -4.2Q6 -3 3.5 -2.4Q1 -1.8 0.5 -0.5H6.5"/><path transform="translate(1296,1038)" d="M3 -4.6Q0.8 -4.6 0.8 -6.6Q0.8 -8.5 3 -8.5Q5.2 -8.5 5.2 -6.6Q5.2 -4.6 3 -4.6Q0.5 -4.6 0.5 -2.5Q0.5 -0.5 3 -0.5Q5.5 -0.5 5.5 -2.5Q5.5 -4.6 3 -4.6Z"/><path transform="translate(1308,1038)" d="M1.5 -5.5H4.5Q5.5 -5.5 5.5 -4V-2Q5.5 -0.5 4.5 -0.5H1.5Q0.5 -0.5 0.5 -2V-4Q0.5 -5.5 1.5 -5.5Z"/><path transform="translate(1316,1038)" d="M1.5 -5.5H4.5Q5.5 -5.5 5.5 -4V-2Q5.5 -0.5 4.5 -0.5H1.5Q0.5 -0.5 0.5 -2V-4Q0.5 -5.5 1.5 -5.5Z"/><path transform="translate(1333,1038)" d="M0.8 -4.9Q1.5 -5.5 3 -5.5Q5.5 -5.5 5.5 -4.1Q5.5 -2.7 3 -2.7Q6 -2.7 6 -0.6Q6 1.5 3 1.5Q1.3 1.5 0.5 0.8"/><path transform="translate(1341,1038)" d="M1.5 -5.5H4.5Q5.5 -5.5 5.5 -4V-2Q5.5 -0.5 4.5 -0.5H1.5Q0.5 -0.5 0.5 -2V-4Q0.5 -5.5 1.5 -5.5Z"/><path transform="translate(1353,1038)" d="M1.5 -5.5H4.5Q5.5 -5.5 5.5 -4V-2Q5.5 -0.5 4.5 -0.5H1.5Q0.5 -0.5 0.5 -2V-4Q0.5 -5.5 1.5 -5.5Z"/><path transform="translate(1361,1038)" d="M1.5 -5.5H4.5Q5.5 -5.5 5.5 -4V-2Q5.5 -0.5 4.5 -0.5H1.5Q0.5 -0.5 0.5 -2V-4Q0.5 -5.5 1.5 -5.5Z"/><path transform="translate(1377,1038)" d="M0.8 -4.9Q1.5 -5.5 3 -5.5Q5.5 -5.5 5.5 -4.1Q5.5 -2.7 3 -2.7Q6 -2.7 6 -0.6Q6 1.5 3 1.5Q1.3 1.5 0.5 0.8"/><path transform="translate(1385,1038)" d="M0.5 -4.8Q1.5 -5.5 3.5 -5.5Q6 -5.5 6 -4.2Q6 -3 3.5 -2.4Q1 -1.8 0.5 -0.5H6.5"/><path transform="translate(1398,1038)" d="M1.5 -5.5H4.5Q5.5 -5.5 5.5 -4V-2Q5.5 -0.5 4.5 -0.5H1.5Q0.5 -0.5 0.5 -2V-4Q0.5 -5.5 1.5 -5.5Z"/><path transform="translate(1406,1038)" d="M1.5 -5.5H4.5Q5.5 -5.5 5.5 -4V-2Q5.5 -0.5 4.5 -0.5H1.5Q0.5 -0.5 0.5 -2V-4Q0.5 -5.5 1.5 -5.5Z"/><path transform="translate(1422,1038)" d="M0.8 -4.9Q1.5 -5.5 3 -5.5Q5.5 -5.5 5.5 -4.1Q5.5 -2.7 3 -2.7Q6 -2.7 6 -0.6Q6 1.5 3 1.5Q1.3 1.5 0.5 0.8"/><path transform="translate(1430,1038)" d="M5.5 1.5V-5.5L0.5 -0.5H7.5"/><path transform="translate(1443,1038)" d="M1.5 -5.5H4.5Q5.5 -5.5 5.5 -4V-2Q5.5 -0.5 4.5 -0.5H1.5Q0.5 -0.5 0.5 -2V-4Q0.5 -5.5 1.5 -5.5Z"/><path transform="translate(1451,1038)" d="M1.5 -5.5H4.5Q5.5 -5.5 5.5 -4V-2Q5.5 -0.5 4.5 -0.5H1.5Q0.5 -0.5 0.5 -2V-4Q0.5 -5.5 1.5 -5.5Z"/><path transform="translate(1467,1038)" d="M0.8 -4.9Q1.5 -5.5 3 -5.5Q5.5 -5.5 5.5 -4.1Q5.5 -2.7 3 -2.7Q6 -2.7 6 -0.6Q6 1.5 3 1.5Q1.3 1.5 0.5 0.8"/><path transform="translate(1475,1038)" d="M5 -8.5Q0.5 -7.8 0.5 -3Q0.5 -0.5 3 -0.5Q5.5 -0.5 5.5 -2.6Q5.5 -4.6 3.1 -4.6Q1.4 -4.6 0.6 -3.4"/><path transform="translate(1487,1038)" d="M1.5 -5.5H4.5Q5.5 -5.5 5.5 -4V-2Q5.5 -0.5 4.5 -0.5H1.5Q0.5 -0.5 0.5 -2V-4Q0.5 -5.5 1.5 -5.5Z"/><path transform="translate(1495,1038)" d="M1.5 -5.5H4.5Q5.5 -5.5 5.5 -4V-2Q5.5 -0.5 4.5 -0.5H1.5Q0.5 -0.5 0.5 -2V-4Q0.5 -5.5 1.5 -5.5Z"/><path transform="translate(1512,1038)" d="M0.8 -4.9Q1.5 -5.5 3 -5.5Q5.5 -5.5 5.5 -4.1Q5.5 -2.7 3 -2.7Q6 -2.7 6 -0.6Q6 1.5 3 1.5Q1.3 1.5 0.5 0.8"/><path transform="translate(1520,1038)" d="M3 -4.6Q0.8 -4.6 0.8 -6.6Q0.8 -8.5 3 -8.5Q5.2 -8.5 5.2 -6.6Q5.2 -4.6 3 -4.6Q0.5 -4.6 0.5 -2.5Q0.5 -0.5 3 -0.5Q5.5 -0.5 5.5 -2.5Q5.5 -4.6 3 -4.6Z"/><path transform="translate(1532,1038)" d="M1.5 -5.5H4.5Q5.5 -5.5 5.5 -4V-2Q5.5 -0.5 4.5 -0.5H1.5Q0.5 -0.5 0.5 -2V-4Q0.5 -5.5 1.5 -5.5Z"/><path transform="translate(1540,1038)" d="M1.5 -5.5H4.5Q5.5 -5.5 5.5 -4V-2Q5.5 -0.5 4.5 -0.5H1.5Q0.5 -0.5 0.5 -2V-4Q0.5 -5.5 1.5 -5.5Z"/><path transform="translate(1556,1038)" d="M5.5 1.5V-5.5L0.5 -0.5H7.5"/><path transform="translate(1565,1038)" d="M1.5 -5.5H4.5Q5.5 -5.5 5.5 -4V-2Q5.5 -0.5 4.5 -0.5H1.5Q0.5 -0.5 0.5 -2V-4Q0.5 -5.5 1.5 -5.5Z"/><path transform="translate(1577,1038)" d="M1.5 -5.5H4.5Q5.5 -5.5 5.5 -4V-2Q5.5 -0.5 4.5 -0.5H1.5Q0.5 -0.5 0.5 -2V-4Q0.5 -5.5 1.5 -5.5Z"/><path transform="translate(1585,1038)" d="M1.5 -5.5H4.5Q5.5 -5.5 5.5 -4V-2Q5.5 -0.5 4.5 -0.5H1.5Q0.5 -0.5 0.5 -2V-4Q0.5 -5.5 1.5 -5.5Z"/><path transform="translate(1601,1038)" d="M5.5 1.5V-5.5L0.5 -0.5H7.5"/><path transform="translate(1610,1038)" d="M0.5 -4.8Q1.5 -5.5 3.5 -5.5Q6 -5.5 6 -4.2Q6 -3 3.5 -2.4Q1 -1.8 0.5 -0.5H6.5"/><path transform="translate(1623,1038)" d="M1.5 -5.5H4.5Q5.5 -5.5 5.5 -4V-2Q5.5 -0.5 4.5 -0.5H1.5Q0.5 -0.5 0.5 -2V-4Q0.5 -5.5 1.5 -5.5Z"/><path transform="translate(1631,1038)" d="M1.5 -5.5H4.5Q5.5 -5.5 5.5 -4V-2Q5.5 -0.5 4.5 -0.5H1.5Q0.5 -0.5 0.5 -2V-4Q0.5 -5.5 1.5 -5.5Z"/><path transform="translate(1646,1038)" d="M5.5 1.5V-5.5L0.5 -0.5H7.5"/><path transform="translate(1655,1038)" d="M5.5 1.5V-5.5L0.5 -0.5H7.5"/><path transform="translate(1668,1038)" d="M1.5 -5.5H4.5Q5.5 -5.5 5.5 -4V-2Q5.5 -0.5 4.5 -0.5H1.5Q0.5 -0.5 0.5 -2V-4Q0.5 -5.5 1.5 -5.5Z"/><path transform="translate(1676,1038)" d="M1.5 -5.5H4.5Q5.5 -5.5 5.5 -4V-2Q5.5 -0.5 4.5 -0.5H1.5Q0.5 -0.5 0.5 -2V-4Q0.5 -5.5 1.5 -5.5Z"/><path transform="translate(1691,1038)" d="M5.5 1.5V-5.5L0.5 -0.5H7.5"/><path transform="translate(1700,1038)" d="M5 -8.5Q0.5 -7.8 0.5 -3Q0.5 -0.5 3 -0.5Q5.5 -0.5 5.5 -2.6Q5.5 -4.6 3.1 -4.6Q1.4 -4.6 0.6 -3.4"/><path transform="translate(1712,1038)" d="M1.5 -5.5H4.5Q5.5 -5.5 5.5 -4V-2Q5.5 -0.5 4.5 -0.5H1.5Q0.5 -0.5 0.5 -2V-4Q0.5 -5.5 1.5 -5.5Z"/><path transform="translate(1720,1038)" d="M1.5 -5.5H4.5Q5.5 -5.5 5.5 -4V-2Q5.5 -0.5 4.5 -0.5H1.5Q0.5 -0.5 0.5 -2V-4Q0.5 -5.5 1.5 -5.5Z"/><path transform="translate(1736,1038)" d="M5.5 1.5V-5.5L0.5 -0.5H7.5"/><path transform="translate(1745,1038)" d="M3 -4.6Q0.8 -4.6 0.8 -6.6Q0.8 -8.5 3 -8.5Q5.2 -8.5 5.2 -6.6Q5.2 -4.6 3 -4.6Q0.5 -4.6 0.5 -2.5Q0.5 -0.5 3 -0.5Q5.5 -0.5 5.5 -2.5Q5.5 -4.6 3 -4.6Z"/><path transform="translate(1757,1038)" d="M1.5 -5.5H4.5Q5.5 -5.5 5.5 -4V-2Q5.5 -0.5 4.5 -0.5H1.5Q0.5 -0.5 0.5 -2V-4Q0.5 -5.5 1.5 -5.5Z"/><path transform="translate(1765,1038)" d="M1.5 -5.5H4.5Q5.5 -5.5 5.5 -4V-2Q5.5 -0.5 4.5 -0.5H1.5Q0.5 -0.5 0.5 -2V-4Q0.5 -5.5 1.5 -5.5Z"/><path transform="translate(1781,1038)" d="M6 -5.5H0.5V-2.5H3.5Q5.5 -2.5 5.5 -0.5Q5.5 1.5 3 1.5Q1.2 1.5 0.3 0.8"/><path transform="translate(1789,1038)" d="M1.5 -5.5H4.5Q5.5 -5.5 5.5 -4V-2Q5.5 -0.5 4.5 -0.5H1.5Q0.5 -0.5 0.5 -2V-4Q0.5 -5.5 1.5 -5.5Z"/><path transform="translate(1801,1038)" d="M1.5 -5.5H4.5Q5.5 -5.5 5.5 -4V-2Q5.5 -0.5 4.5 -0.5H1.5Q0.5 -0.5 0.5 -2V-4Q0.5 -5.5 1.5 -5.5Z"/><path transform="translate(1809,1038)" d="M1.5 -5.5H4.5Q5.5 -5.5 5.5 -4V-2Q5.5 -0.5 4.5 -0.5H1.5Q0.5 -0.5 0.5 -2V-4Q0.5 -5.5 1.5 -5.5Z"/><path transform="translate(1826,1038)" d="M6 -5.5H0.5V-2.5H3.5Q5.5 -2.5 5.5 -0.5Q5.5 1.5 3 1.5Q1.2 1.5 0.3 0.8"/><path transform="translate(1834,1038)" d="M0.5 -4.8Q1.5 -5.5 3.5 -5.5Q6 -5.5 6 -4.2Q6 -3 3.5 -2.4Q1 -1.8 0.5 -0.5H6.5"/><path transform="translate(1847,1038)" d="M1.5 -5.5H4.5Q5.5 -5.5 5.5 -4V-2Q5.5 -0.5 4.5 -0.5H1.5Q0.5 -0.5 0.5 -2V-4Q0.5 -5.5 1.5 -5.5Z"/><path transform="translate(1855,1038)" d="M1.5 -5.5H4.5Q5.5 -5.5 5.5 -4V-2Q5.5 -0.5 4.5 -0.5H1.5Q0.5 -0.5 0.5 -2V-4Q0.5 -5.5 1.5 -5.5Z"/><path transform="translate(1870,1038)" d="M6 -5.5H0.5V-2.5H3.5Q5.5 -2.5 5.5 -0.5Q5.5 1.5 3 1.5Q1.2 1.5 0.3 0.8"/><path transform="translate(1878,1038)" d="M5.5 1.5V-5.5L0.5 -0.5H7.5"/><path transform="translate(1891,1038)" d="M1.5 -5.5H4.5Q5.5 -5.5 5.5 -4V-2Q5.5 -0.5 4.5 -0.5H1.5Q0.5 -0.5 0.5 -2V-4Q0.5 -5.5 1.5 -5.5Z"/><path transform="translate(1899,1038)" d="M1.5 -5.5H4.5Q5.5 -5.5 5.5 -4V-2Q5.5 -0.5 4.5 -0.5H1.5Q0.5 -0.5 0.5 -2V-4Q0.5 -5.5 1.5 -5.5Z"/></g><g fill="#000"><path transform="translate(672,1038)" d="M0 -6h2v2h-2zM0 -2h2v2h-2z"/><path transform="translate(717,1038)" d="M0 -6h2v2h-2zM0 -2h2v2h-2z"/><path transform="translate(762,1038)" d="M0 -6h2v2h-2zM0 -2h2v2h-2z"/><path transform="translate(806,1038)" d="M0 -6h2v2h-2zM0 -2h2v2h-2z"/><path transform="translate(851,1038)" d="M0 -6h2v2h-2zM0 -2h2v2h-2z"/><path transform="translate(899,1038)" d="M0 -6h2v2h-2zM0 -2h2v2h-2z"/><path transform="translate(945,1038)" d="M0 -6h2v2h-2zM0 -2h2v2h-2z"/><path transform="translate(990,1038)" d="M0 -6h2v2h-2zM0 -2h2v2h-2z"/><path transform="translate(1034,1038)" d="M0 -6h2v2h-2zM0 -2h2v2h-2z"/><path transform="translate(1079,1038)" d="M0 -6h2v2h-2zM0 -2h2v2h-2z"/><path transform="translate(1125,1038)" d="M0 -6h2v2h-2zM0 -2h2v2h-2z"/><path transform="translate(1170,1038)" d="M0 -6h2v2h-2zM0 -2h2v2h-2z"/><path transform="translate(1215,1038)" d="M0 -6h2v2h-2zM0 -2h2v2h-2z"/><path transform="translate(1259,1038)" d="M0 -6h2v2h-2zM0 -2h2v2h-2z"/><path transform="translate(1304,1038)" d="M0 -6h2v2h-2zM0 -2h2v2h-2z"/><path transform="translate(1349,1038)" d="M0 -6h2v2h-2zM0 -2h2v2h-2z"/><path transform="translate(1394,1038)" d="M0 -6h2v2h-2zM0 -2h2v2h-2z"/><path transform="translate(1439,1038)" d="M0 -6h2v2h-2zM0 -2h2v2h-2z"/><path transform="translate(1483,1038)" d="M0 -6h2v2h-2zM0 -2h2v2h-2z"/><path transform="translate(1528,1038)" d="M0 -6h2v2h-2zM0 -2h2v2h-2z"/><path transform="translate(1573,1038)" d="M0 -6h2v2h-2zM0 -2h2v2h-2z"/><path transform="translate(1619,1038)" d="M0 -6h2v2h-2zM0 -2h2v2h-2z"/><path transform="translate(1664,1038)" d="M0 -6h2v2h-2zM0 -2h2v2h-2z"/><path transform="translate(1708,1038)" d="M0 -6h2v2h-2zM0 -2h2v2h-2z"/><path transform="translate(1753,1038)" d="M0 -6h2v2h-2zM0 -2h2v2h-2z"/><path transform="translate(1797,1038)" d="M0 -6h2v2h-2zM0 -2h2v2h-2z"/><path transform="translate(1843,1038)" d="M0 -6h2v2h-2zM0 -2h2v2h-2z"/><path transform="translate(1887,1038)" d="M0 -6h2v2h-2zM0 -2h2v2h-2z"/></g></svg></div>
<div class="a" style="left:0px;top:1077px;width:1920px;height:1px;background:#fafafa"></div>
<div class="a" style="left:0px;top:1078px;width:1920px;height:2px;background:#3c3c3c"></div>
</body></html>
